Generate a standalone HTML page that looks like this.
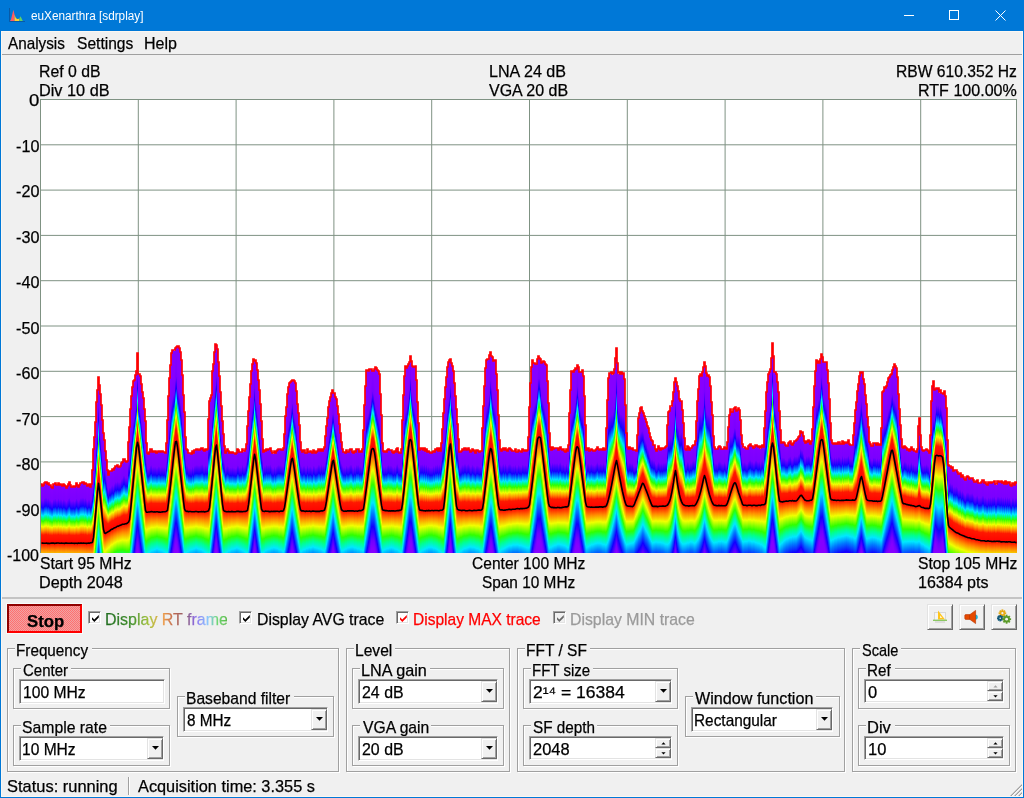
<!DOCTYPE html>
<html lang="en"><head><meta charset="utf-8"><title>euXenarthra [sdrplay]</title>
<style>
*{box-sizing:border-box;margin:0;padding:0}
html,body{width:1024px;height:798px;overflow:hidden;background:#f0f0f0}
body{position:relative;font-family:"Liberation Sans",sans-serif;font-size:16.2px;color:#000;line-height:18px}
.t{position:absolute;white-space:nowrap;height:18px;line-height:18px;transform-origin:0 0;font-size:16.2px;-webkit-text-stroke:0.25px currentColor}
.r{text-align:right}
.c{text-align:center}
#title{position:absolute;left:0;top:0;width:1024px;height:31px;background:#0078d7}
.tt{position:absolute;height:16px;line-height:16px;color:#fff;white-space:nowrap;transform-origin:0 0}
#frame{position:absolute;left:0;top:0;width:1024px;height:798px;border:1px solid #0078d7;pointer-events:none}
#menuline{position:absolute;left:1px;top:54px;width:1022px;height:1px;background:#a0a0a0}
.gb{position:absolute;border:1px solid #a0a0a0;box-shadow:1px 1px 0 #fff, inset 1px 1px 0 #fff}
.gl{position:absolute;background:#f0f0f0;padding:0 2px;height:18px;line-height:18px;white-space:nowrap}
.sunk{position:absolute;background:#fff;border:1px solid;border-color:#a0a0a0 #fff #fff #a0a0a0;box-shadow:inset 1px 1px 0 #696969, inset -1px -1px 0 #e3e3e3}
.sunk .v{position:absolute;left:4px;top:2px;height:18px;line-height:18px;white-space:nowrap}
.btn3{position:absolute;background:#f0f0f0;border:1px solid;border-color:#e3e3e3 #696969 #696969 #e3e3e3;box-shadow:inset 1px 1px 0 #fff, inset -1px -1px 0 #a0a0a0}
.cb{position:absolute;width:13px;height:13px;background:#fff;border:1px solid;border-color:#a0a0a0 #fff #fff #a0a0a0;box-shadow:inset 1px 1px 0 #696969, inset -1px -1px 0 #e3e3e3}
.cb svg{position:absolute;left:2px;top:2px}
.rt{background:linear-gradient(90deg,#1e6b1e 0%,#3f8f2a 22%,#a8c43c 36%,#f0a04a 47%,#c06a50 56%,#8a5a6a 66%,#8c6cf0 74%,#8cc8ff 84%,#6fd86f 92%,#58b848 100%);-webkit-background-clip:text;background-clip:text;color:transparent}
</style></head><body>
<div id="title"><svg style="position:absolute;left:9px;top:8px" width="17" height="15" viewBox="0 0 17 15"><path d="M0.5 0V13.5H16" fill="none" stroke="#103c78" stroke-opacity=".5" stroke-width="1"/><path d="M1 13L2 11.4L4.4 1.7L5.5 6.4V13Z" fill="#ff5a64"/><path d="M5.5 6.4L6.6 9.6L8 11L10.3 10.8V13H5.5Z" fill="#ffcf30"/><path d="M10.3 10.8L11.4 8.2L12.4 10L13.8 13H10.3Z" fill="#5fd068"/></svg><div class="tt" style="left:31.03px;top:8px;transform:scaleX(0.9801);font-size:12px;">euXenarthra [sdrplay]</div><svg style="position:absolute;left:896px;top:0" width="128" height="31" viewBox="0 0 128 31" fill="none" stroke="#fff" stroke-width="1"><path d="M8 15.5H18"/><rect x="53.5" y="10.5" width="9" height="9"/><path d="M99.5 10.5L109.5 20.5M109.5 10.5L99.5 20.5"/></svg></div>
<div class="t" style="left:7.90px;top:34px;transform:scaleX(0.9435);">Analysis</div><div class="t" style="left:76.60px;top:34px;transform:scaleX(0.9622);">Settings</div><div class="t" style="left:144.02px;top:34px;transform:scaleX(0.9889);">Help</div><div id="menuline"></div>
<div class="t" style="left:39.03px;top:62px;transform:scaleX(0.9768);">Ref 0 dB</div><div class="t" style="left:39.00px;top:81px;transform:scaleX(1.0056);">Div 10 dB</div><div class="t" style="left:489.41px;top:62px;transform:scaleX(0.9956);">LNA 24 dB</div><div class="t" style="left:489.10px;top:81px;transform:scaleX(0.9887);">VGA 20 dB</div><div class="t" style="left:896.25px;top:62px;transform:scaleX(0.9665);">RBW 610.352 Hz</div><div class="t" style="left:917.71px;top:81px;transform:scaleX(0.9922);">RTF 100.00%</div><div class="t" style="left:39.59px;top:554px;transform:scaleX(0.9702);">Start 95 MHz</div><div class="t" style="left:39.30px;top:573px;transform:scaleX(1.0023);">Depth 2048</div><div class="t" style="left:472.02px;top:554px;transform:scaleX(0.9622);">Center 100 MHz</div><div class="t" style="left:482.06px;top:573px;transform:scaleX(0.9502);">Span 10 MHz</div><div class="t" style="left:917.99px;top:554px;transform:scaleX(0.9687);">Stop 105 MHz</div><div class="t" style="left:918.20px;top:573px;transform:scaleX(0.9911);">16384 pts</div><div class="t" style="left:28.95px;top:91px;transform:scaleX(1.1455);">0</div><div class="t" style="left:15.75px;top:137px;transform:scaleX(1.0003);">-10</div><div class="t" style="left:15.75px;top:182px;transform:scaleX(1.0003);">-20</div><div class="t" style="left:15.75px;top:228px;transform:scaleX(1.0003);">-30</div><div class="t" style="left:15.75px;top:273px;transform:scaleX(1.0003);">-40</div><div class="t" style="left:15.75px;top:319px;transform:scaleX(1.0003);">-50</div><div class="t" style="left:15.75px;top:364px;transform:scaleX(1.0003);">-60</div><div class="t" style="left:15.75px;top:410px;transform:scaleX(1.0003);">-70</div><div class="t" style="left:15.75px;top:455px;transform:scaleX(1.0003);">-80</div><div class="t" style="left:15.75px;top:501px;transform:scaleX(1.0003);">-90</div><div class="t" style="left:7.16px;top:546px;transform:scaleX(0.9877);">-100</div><svg style="position:absolute;left:40px;top:99px" width="977" height="454" viewBox="40 99 977 454" shape-rendering="crispEdges"><defs><linearGradient id="u" x1="0" y1="0" x2="0" y2="1"><stop offset="0.0" stop-color="#8600ff"/><stop offset="0.25" stop-color="#7a00ff"/><stop offset="0.385" stop-color="#1400ff"/><stop offset="0.45" stop-color="#0070ff"/><stop offset="0.52" stop-color="#00e8ff"/><stop offset="0.565" stop-color="#00ff80"/><stop offset="0.615" stop-color="#30ff00"/><stop offset="0.71" stop-color="#f0ff00"/><stop offset="0.78" stop-color="#ff9000"/><stop offset="0.85" stop-color="#ff1800"/><stop offset="1.0" stop-color="#ff0000"/></linearGradient><linearGradient id="l" x1="0" y1="0" x2="0" y2="1"><stop offset="0.0" stop-color="#ff0800"/><stop offset="0.03" stop-color="#ff2800"/><stop offset="0.115" stop-color="#ff8c00"/><stop offset="0.22" stop-color="#f0ff00"/><stop offset="0.36" stop-color="#30ff00"/><stop offset="0.45" stop-color="#00ff90"/><stop offset="0.54" stop-color="#00e8ff"/><stop offset="0.65" stop-color="#0078ff"/><stop offset="0.78" stop-color="#1000ff"/><stop offset="0.92" stop-color="#7000ff"/><stop offset="1.0" stop-color="#8600ff"/></linearGradient></defs><rect x="40" y="99" width="977" height="454" fill="#fff"/><path d="M40.5 99V553M138.3 99V553M236.1 99V553M333.9 99V553M431.7 99V553M529.5 99V553M627.3 99V553M725.1 99V553M822.9 99V553M920.7 99V553M1016.5 99V553M40 99.5H1017M40 144.8H1017M40 190.1H1017M40 235.4H1017M40 280.7H1017M40 326.0H1017M40 371.3H1017M40 416.6H1017M40 461.9H1017M40 507.2H1017M40 552.5H1017" stroke="#7f9283" stroke-width="1" fill="none" shape-rendering="auto"/><path d="M41,553 L41,484.3 L42,484.3 L42,485.5 L43,485.5 L43,485.4 L44,485.4 L44,483.2 L45,483.2 L45,482.3 L46,482.3 L46,482.1 L47,482.1 L47,483.7 L48,483.7 L48,482.9 L49,482.9 L49,484.9 L50,484.9 L50,485.4 L51,485.4 L51,487.4 L52,487.4 L52,487.6 L53,487.6 L53,484.3 L54,484.3 L54,483.9 L55,483.9 L55,483.2 L56,483.2 L56,485.1 L57,485.1 L57,485.3 L58,485.3 L58,483.1 L59,483.1 L59,485.2 L60,485.2 L60,484.3 L61,484.3 L61,484.6 L62,484.6 L62,486.3 L63,486.3 L63,484.3 L64,484.3 L64,484.9 L65,484.9 L65,486.1 L66,486.1 L66,487.7 L67,487.7 L67,485.6 L68,485.6 L68,483.7 L69,483.7 L69,482.5 L70,482.5 L70,485.4 L71,485.4 L71,486.9 L72,486.9 L72,486.6 L73,486.6 L73,486 L74,486 L74,487 L75,487 L75,485.6 L76,485.6 L76,483.3 L77,483.3 L77,485.1 L78,485.1 L78,486.6 L79,486.6 L79,485.1 L80,485.1 L80,482.9 L81,482.9 L81,482.8 L82,482.8 L82,482.3 L83,482.3 L83,482.4 L84,482.4 L84,483.7 L85,483.7 L85,482.7 L86,482.7 L86,484.5 L87,484.5 L87,486.3 L88,486.3 L88,484.5 L89,484.5 L89,484.2 L90,484.2 L90,486.9 L91,486.9 L91,484.2 L92,484.2 L92,470.2 L93,470.2 L93,448.9 L94,448.9 L94,436.7 L95,436.7 L95,421.6 L96,421.6 L96,402.1 L97,402.1 L97,390.3 L98,390.3 L98,377.5 L99,377.5 L99,384.8 L100,384.8 L100,394.1 L101,394.1 L101,405.3 L102,405.3 L102,419.5 L103,419.5 L103,432.6 L104,432.6 L104,440.2 L105,440.2 L105,451.3 L106,451.3 L106,459.9 L107,459.9 L107,470.4 L108,470.4 L108,475.4 L109,475.4 L109,471.4 L110,471.4 L110,471.4 L111,471.4 L111,470.6 L112,470.6 L112,469.4 L113,469.4 L113,470.4 L114,470.4 L114,467.6 L115,467.6 L115,465.7 L116,465.7 L116,466.4 L117,466.4 L117,465.2 L118,465.2 L118,466.7 L119,466.7 L119,466.9 L120,466.9 L120,466.5 L121,466.5 L121,462.9 L122,462.9 L122,461.7 L123,461.7 L123,459.3 L124,459.3 L124,458.9 L125,458.9 L125,461.4 L126,461.4 L126,461.7 L127,461.7 L127,461.3 L128,461.3 L128,441.9 L129,441.9 L129,426.8 L130,426.8 L130,409.2 L131,409.2 L131,395.9 L132,395.9 L132,387.3 L133,387.3 L133,380.5 L134,380.5 L134,379.9 L135,379.9 L135,374.9 L136,374.9 L136,371.1 L137,371.1 L137,353.4 L138,353.4 L138,374 L139,374 L139,374.1 L140,374.1 L140,376.3 L141,376.3 L141,384.4 L142,384.4 L142,391.8 L143,391.8 L143,397.7 L144,397.7 L144,409.1 L145,409.1 L145,421.2 L146,421.2 L146,443 L147,443 L147,453 L148,453 L148,453.9 L149,453.9 L149,452.4 L150,452.4 L150,449.4 L151,449.4 L151,449.2 L152,449.2 L152,451.9 L153,451.9 L153,451.4 L154,451.4 L154,451.6 L155,451.6 L155,451.5 L156,451.5 L156,452.7 L157,452.7 L157,452 L158,452 L158,450.5 L159,450.5 L159,451 L160,451 L160,452.4 L161,452.4 L161,451.4 L162,451.4 L162,451.3 L163,451.3 L163,452.2 L164,452.2 L164,451.7 L165,451.7 L165,453.4 L166,453.4 L166,443.4 L167,443.4 L167,420.3 L168,420.3 L168,395.7 L169,395.7 L169,377.8 L170,377.8 L170,364.7 L171,364.7 L171,352.9 L172,352.9 L172,350 L173,350 L173,350.3 L174,350.3 L174,350.5 L175,350.5 L175,348 L176,348 L176,347 L177,347 L177,346.2 L178,346.2 L178,346.2 L179,346.2 L179,348.4 L180,348.4 L180,351.6 L181,351.6 L181,359.7 L182,359.7 L182,374.5 L183,374.5 L183,395.3 L184,395.3 L184,412.4 L185,412.4 L185,437.5 L186,437.5 L186,449.1 L187,449.1 L187,450.1 L188,450.1 L188,452.8 L189,452.8 L189,453.1 L190,453.1 L190,453.5 L191,453.5 L191,453.6 L192,453.6 L192,451.3 L193,451.3 L193,453.2 L194,453.2 L194,450.2 L195,450.2 L195,449.6 L196,449.6 L196,449 L197,449 L197,449 L198,449 L198,449.5 L199,449.5 L199,449.6 L200,449.6 L200,449.1 L201,449.1 L201,448.2 L202,448.2 L202,447.9 L203,447.9 L203,450.2 L204,450.2 L204,450.7 L205,450.7 L205,449.2 L206,449.2 L206,450.1 L207,450.1 L207,448.8 L208,448.8 L208,419.4 L209,419.4 L209,401.3 L210,401.3 L210,398 L211,398 L211,395.1 L212,395.1 L212,370.8 L213,370.8 L213,364.4 L214,364.4 L214,352.1 L215,352.1 L215,344.2 L216,344.2 L216,344.9 L217,344.9 L217,348.8 L218,348.8 L218,361.9 L219,361.9 L219,376.4 L220,376.4 L220,392.1 L221,392.1 L221,406.3 L222,406.3 L222,420.5 L223,420.5 L223,434.1 L224,434.1 L224,445.5 L225,445.5 L225,452.9 L226,452.9 L226,450.9 L227,450.9 L227,449.4 L228,449.4 L228,451.1 L229,451.1 L229,452.6 L230,452.6 L230,452.2 L231,452.2 L231,452.9 L232,452.9 L232,451.8 L233,451.8 L233,452.8 L234,452.8 L234,453.2 L235,453.2 L235,453.6 L236,453.6 L236,452.8 L237,452.8 L237,449.5 L238,449.5 L238,449.8 L239,449.8 L239,452.1 L240,452.1 L240,452 L241,452 L241,452.2 L242,452.2 L242,449.1 L243,449.1 L243,451.5 L244,451.5 L244,451.3 L245,451.3 L245,449.1 L246,449.1 L246,443.5 L247,443.5 L247,426.3 L248,426.3 L248,411.2 L249,411.2 L249,397.1 L250,397.1 L250,383.7 L251,383.7 L251,370.9 L252,370.9 L252,363.8 L253,363.8 L253,359.3 L254,359.3 L254,361.1 L255,361.1 L255,360.1 L256,360.1 L256,363 L257,363 L257,370.1 L258,370.1 L258,379.8 L259,379.8 L259,389.7 L260,389.7 L260,403.7 L261,403.7 L261,421 L262,421 L262,439.5 L263,439.5 L263,452 L264,452 L264,450.1 L265,450.1 L265,450.6 L266,450.6 L266,448.5 L267,448.5 L267,449.8 L268,449.8 L268,448.9 L269,448.9 L269,449.3 L270,449.3 L270,448.1 L271,448.1 L271,451.5 L272,451.5 L272,453.1 L273,453.1 L273,453.5 L274,453.5 L274,451.2 L275,451.2 L275,453.3 L276,453.3 L276,451.1 L277,451.1 L277,449.9 L278,449.9 L278,448.7 L279,448.7 L279,449.1 L280,449.1 L280,449.1 L281,449.1 L281,450.3 L282,450.3 L282,450.1 L283,450.1 L283,447.6 L284,447.6 L284,433.6 L285,433.6 L285,416.2 L286,416.2 L286,407.3 L287,407.3 L287,393.8 L288,393.8 L288,387.2 L289,387.2 L289,382.8 L290,382.8 L290,382 L291,382 L291,380.8 L292,380.8 L292,380 L293,380 L293,380.1 L294,380.1 L294,381.1 L295,381.1 L295,382.8 L296,382.8 L296,391 L297,391 L297,403.5 L298,403.5 L298,412.8 L299,412.8 L299,425.4 L300,425.4 L300,442.3 L301,442.3 L301,450.4 L302,450.4 L302,452.3 L303,452.3 L303,450.3 L304,450.3 L304,450.1 L305,450.1 L305,452.6 L306,452.6 L306,453.1 L307,453.1 L307,449.4 L308,449.4 L308,452.1 L309,452.1 L309,451.6 L310,451.6 L310,450.6 L311,450.6 L311,452.2 L312,452.2 L312,453.4 L313,453.4 L313,449.9 L314,449.9 L314,450.5 L315,450.5 L315,452.7 L316,452.7 L316,452.1 L317,452.1 L317,451 L318,451 L318,448.7 L319,448.7 L319,448.8 L320,448.8 L320,450.7 L321,450.7 L321,449 L322,449 L322,450.7 L323,450.7 L323,448.9 L324,448.9 L324,446.6 L325,446.6 L325,436 L326,436 L326,425.5 L327,425.5 L327,418.3 L328,418.3 L328,407.4 L329,407.4 L329,400.7 L330,400.7 L330,396.7 L331,396.7 L331,393.1 L332,393.1 L332,390.3 L333,390.3 L333,393.1 L334,393.1 L334,393.4 L335,393.4 L335,397.1 L336,397.1 L336,399.1 L337,399.1 L337,406.1 L338,406.1 L338,413.5 L339,413.5 L339,424.5 L340,424.5 L340,433 L341,433 L341,442.4 L342,442.4 L342,449.1 L343,449.1 L343,451.9 L344,451.9 L344,452.1 L345,452.1 L345,453.1 L346,453.1 L346,450 L347,450 L347,451.5 L348,451.5 L348,451.7 L349,451.7 L349,450.4 L350,450.4 L350,449 L351,449 L351,449 L352,449 L352,452.1 L353,452.1 L353,453.2 L354,453.2 L354,450.8 L355,450.8 L355,452.1 L356,452.1 L356,449 L357,449 L357,449.4 L358,449.4 L358,448.7 L359,448.7 L359,451.7 L360,451.7 L360,450.5 L361,450.5 L361,451.8 L362,451.8 L362,448.8 L363,448.8 L363,429.7 L364,429.7 L364,405 L365,405 L365,385.7 L366,385.7 L366,370.4 L367,370.4 L367,370.4 L368,370.4 L368,371.3 L369,371.3 L369,369.2 L370,369.2 L370,368.8 L371,368.8 L371,369.3 L372,369.3 L372,370.6 L373,370.6 L373,370.5 L374,370.5 L374,368.5 L375,368.5 L375,367.4 L376,367.4 L376,368.2 L377,368.2 L377,369.5 L378,369.5 L378,371 L379,371 L379,374 L380,374 L380,393.7 L381,393.7 L381,414.8 L382,414.8 L382,442.9 L383,442.9 L383,451.3 L384,451.3 L384,452.3 L385,452.3 L385,451.4 L386,451.4 L386,451.9 L387,451.9 L387,449.8 L388,449.8 L388,448.6 L389,448.6 L389,450.1 L390,450.1 L390,449.8 L391,449.8 L391,450.2 L392,450.2 L392,451.8 L393,451.8 L393,453.1 L394,453.1 L394,451.2 L395,451.2 L395,452.2 L396,452.2 L396,448.9 L397,448.9 L397,448.1 L398,448.1 L398,451.8 L399,451.8 L399,452.8 L400,452.8 L400,452.9 L401,452.9 L401,448.6 L402,448.6 L402,419.8 L403,419.8 L403,394.9 L404,394.9 L404,375.8 L405,375.8 L405,366 L406,366 L406,368.1 L407,368.1 L407,366 L408,366 L408,364 L409,364 L409,361.6 L410,361.6 L410,356.3 L411,356.3 L411,361.3 L412,361.3 L412,366 L413,366 L413,366.9 L414,366.9 L414,366.7 L415,366.7 L415,366.4 L416,366.4 L416,379.7 L417,379.7 L417,401.6 L418,401.6 L418,422.5 L419,422.5 L419,450.4 L420,450.4 L420,448.4 L421,448.4 L421,449 L422,449 L422,448.2 L423,448.2 L423,449.6 L424,449.6 L424,448.2 L425,448.2 L425,451 L426,451 L426,449.1 L427,449.1 L427,451.9 L428,451.9 L428,450.7 L429,450.7 L429,452.4 L430,452.4 L430,452.8 L431,452.8 L431,452.6 L432,452.6 L432,452.4 L433,452.4 L433,450.5 L434,450.5 L434,451.8 L435,451.8 L435,449.5 L436,449.5 L436,450 L437,450 L437,448.4 L438,448.4 L438,450.6 L439,450.6 L439,448.2 L440,448.2 L440,450.7 L441,450.7 L441,443.3 L442,443.3 L442,428.9 L443,428.9 L443,413.3 L444,413.3 L444,398.7 L445,398.7 L445,387.1 L446,387.1 L446,377.4 L447,377.4 L447,366.9 L448,366.9 L448,361.8 L449,361.8 L449,359.6 L450,359.6 L450,359 L451,359 L451,363.2 L452,363.2 L452,366.2 L453,366.2 L453,371.1 L454,371.1 L454,383.2 L455,383.2 L455,395.9 L456,395.9 L456,409 L457,409 L457,423.9 L458,423.9 L458,439.2 L459,439.2 L459,451.9 L460,451.9 L460,452.2 L461,452.2 L461,450.8 L462,450.8 L462,449 L463,449 L463,449.7 L464,449.7 L464,447.8 L465,447.8 L465,447.7 L466,447.7 L466,450.1 L467,450.1 L467,448.6 L468,448.6 L468,447.8 L469,447.8 L469,449.9 L470,449.9 L470,451.7 L471,451.7 L471,451 L472,451 L472,448.6 L473,448.6 L473,450.1 L474,450.1 L474,451.4 L475,451.4 L475,452.8 L476,452.8 L476,450.4 L477,450.4 L477,449.9 L478,449.9 L478,451.1 L479,451.1 L479,451.9 L480,451.9 L480,451.3 L481,451.3 L481,450.9 L482,450.9 L482,428.3 L483,428.3 L483,405.9 L484,405.9 L484,385.8 L485,385.8 L485,368.3 L486,368.3 L486,359.7 L487,359.7 L487,359.1 L488,359.1 L488,359 L489,359 L489,355.4 L490,355.4 L490,351.8 L491,351.8 L491,356.5 L492,356.5 L492,357.4 L493,357.4 L493,360.6 L494,360.6 L494,360.1 L495,360.1 L495,360.2 L496,360.2 L496,373.6 L497,373.6 L497,390.1 L498,390.1 L498,415.2 L499,415.2 L499,440.1 L500,440.1 L500,449 L501,449 L501,451.1 L502,451.1 L502,449.4 L503,449.4 L503,447.7 L504,447.7 L504,450.4 L505,450.4 L505,447.8 L506,447.8 L506,450.3 L507,450.3 L507,451.2 L508,451.2 L508,449.1 L509,449.1 L509,448.4 L510,448.4 L510,448.6 L511,448.6 L511,450.3 L512,450.3 L512,451 L513,451 L513,450.5 L514,450.5 L514,451.4 L515,451.4 L515,449.3 L516,449.3 L516,451.8 L517,451.8 L517,452.3 L518,452.3 L518,449.6 L519,449.6 L519,450.9 L520,450.9 L520,451.3 L521,451.3 L521,452.1 L522,452.1 L522,449.4 L523,449.4 L523,450.3 L524,450.3 L524,450.7 L525,450.7 L525,450 L526,450 L526,450.8 L527,450.8 L527,449.9 L528,449.9 L528,436.6 L529,436.6 L529,407.3 L530,407.3 L530,383.4 L531,383.4 L531,367.2 L532,367.2 L532,360.3 L533,360.3 L533,363.2 L534,363.2 L534,362.7 L535,362.7 L535,363.7 L536,363.7 L536,363.9 L537,363.9 L537,358.9 L538,358.9 L538,355.9 L539,355.9 L539,358 L540,358 L540,359.2 L541,359.2 L541,363.4 L542,363.4 L542,362 L543,362 L543,361.3 L544,361.3 L544,361.5 L545,361.5 L545,363.8 L546,363.8 L546,365 L547,365 L547,380.7 L548,380.7 L548,402.7 L549,402.7 L549,432.6 L550,432.6 L550,446.6 L551,446.6 L551,449.7 L552,449.7 L552,447.3 L553,447.3 L553,448.7 L554,448.7 L554,447.7 L555,447.7 L555,448.1 L556,448.1 L556,447.9 L557,447.9 L557,447.9 L558,447.9 L558,449.8 L559,449.8 L559,447.7 L560,447.7 L560,446.9 L561,446.9 L561,449.4 L562,449.4 L562,450 L563,450 L563,449.1 L564,449.1 L564,451 L565,451 L565,451.7 L566,451.7 L566,448.8 L567,448.8 L567,451 L568,451 L568,444.5 L569,444.5 L569,413.4 L570,413.4 L570,389.7 L571,389.7 L571,371 L572,371 L572,371.4 L573,371.4 L573,371.5 L574,371.5 L574,370.1 L575,370.1 L575,368 L576,368 L576,368.6 L577,368.6 L577,364.6 L578,364.6 L578,366.5 L579,366.5 L579,372.4 L580,372.4 L580,372.3 L581,372.3 L581,372.4 L582,372.4 L582,370 L583,370 L583,376.2 L584,376.2 L584,395.9 L585,395.9 L585,425.2 L586,425.2 L586,450.1 L587,450.1 L587,447.7 L588,447.7 L588,448.1 L589,448.1 L589,450.6 L590,450.6 L590,449.9 L591,449.9 L591,448.9 L592,448.9 L592,450 L593,450 L593,450.6 L594,450.6 L594,451.1 L595,451.1 L595,450.3 L596,450.3 L596,448.5 L597,448.5 L597,446.9 L598,446.9 L598,449.5 L599,449.5 L599,449.7 L600,449.7 L600,448.8 L601,448.8 L601,449.4 L602,449.4 L602,449.8 L603,449.8 L603,447.7 L604,447.7 L604,449.7 L605,449.7 L605,449 L606,449 L606,428.1 L607,428.1 L607,400.2 L608,400.2 L608,377.7 L609,377.7 L609,373.4 L610,373.4 L610,373.4 L611,373.4 L611,372 L612,372 L612,374.5 L613,374.5 L613,372.7 L614,372.7 L614,369.4 L615,369.4 L615,358.2 L616,358.2 L616,348.4 L617,348.4 L617,362.7 L618,362.7 L618,373.5 L619,373.5 L619,371.7 L620,371.7 L620,373.9 L621,373.9 L621,372.1 L622,372.1 L622,373.9 L623,373.9 L623,373.2 L624,373.2 L624,378.9 L625,378.9 L625,405.1 L626,405.1 L626,433.3 L627,433.3 L627,446.8 L628,446.8 L628,448.9 L629,448.9 L629,447.4 L630,447.4 L630,448 L631,448 L631,448.9 L632,448.9 L632,447.9 L633,447.9 L633,449.9 L634,449.9 L634,450.4 L635,450.4 L635,450.4 L636,450.4 L636,450.6 L637,450.6 L637,434.6 L638,434.6 L638,417.7 L639,417.7 L639,412.8 L640,412.8 L640,407.7 L641,407.7 L641,406.8 L642,406.8 L642,411.1 L643,411.1 L643,412.9 L644,412.9 L644,416.2 L645,416.2 L645,418.8 L646,418.8 L646,421.8 L647,421.8 L647,426.2 L648,426.2 L648,427.9 L649,427.9 L649,432.9 L650,432.9 L650,437.5 L651,437.5 L651,439.6 L652,439.6 L652,441.3 L653,441.3 L653,444.9 L654,444.9 L654,445.1 L655,445.1 L655,449 L656,449 L656,450.6 L657,450.6 L657,448.8 L658,448.8 L658,446.1 L659,446.1 L659,447.9 L660,447.9 L660,449.6 L661,449.6 L661,448.4 L662,448.4 L662,449.3 L663,449.3 L663,448.1 L664,448.1 L664,448.2 L665,448.2 L665,447 L666,447 L666,445.6 L667,445.6 L667,425.3 L668,425.3 L668,412.2 L669,412.2 L669,411.1 L670,411.1 L670,406.5 L671,406.5 L671,406.5 L672,406.5 L672,401 L673,401 L673,392 L674,392 L674,381.7 L675,381.7 L675,378.3 L676,378.3 L676,382.5 L677,382.5 L677,386.5 L678,386.5 L678,390.9 L679,390.9 L679,399.3 L680,399.3 L680,400.9 L681,400.9 L681,401.1 L682,401.1 L682,410.4 L683,410.4 L683,423.1 L684,423.1 L684,438 L685,438 L685,449.2 L686,449.2 L686,450 L687,450 L687,446.2 L688,446.2 L688,447.4 L689,447.4 L689,449.7 L690,449.7 L690,447.8 L691,447.8 L691,448.2 L692,448.2 L692,446.1 L693,446.1 L693,444.7 L694,444.7 L694,444.7 L695,444.7 L695,440.7 L696,440.7 L696,420.6 L697,420.6 L697,401.2 L698,401.2 L698,389.2 L699,389.2 L699,375.8 L700,375.8 L700,374.1 L701,374.1 L701,376.3 L702,376.3 L702,371.7 L703,371.7 L703,367 L704,367 L704,362.3 L705,362.3 L705,365.9 L706,365.9 L706,372.5 L707,372.5 L707,375.6 L708,375.6 L708,374.9 L709,374.9 L709,377.4 L710,377.4 L710,386.1 L711,386.1 L711,401.5 L712,401.5 L712,415.2 L713,415.2 L713,436.2 L714,436.2 L714,447.1 L715,447.1 L715,448.8 L716,448.8 L716,448.5 L717,448.5 L717,449.4 L718,449.4 L718,446.8 L719,446.8 L719,445.8 L720,445.8 L720,447 L721,447 L721,448.7 L722,448.7 L722,449.1 L723,449.1 L723,449.4 L724,449.4 L724,446.7 L725,446.7 L725,448.2 L726,448.2 L726,449.2 L727,449.2 L727,441.9 L728,441.9 L728,427.4 L729,427.4 L729,415.2 L730,415.2 L730,409 L731,409 L731,411.6 L732,411.6 L732,411.6 L733,411.6 L733,409.3 L734,409.3 L734,407.7 L735,407.7 L735,407 L736,407 L736,410.6 L737,410.6 L737,409.9 L738,409.9 L738,408.3 L739,408.3 L739,409.9 L740,409.9 L740,419.6 L741,419.6 L741,435.1 L742,435.1 L742,444.3 L743,444.3 L743,447.5 L744,447.5 L744,447.2 L745,447.2 L745,448.1 L746,448.1 L746,449.1 L747,449.1 L747,448.9 L748,448.9 L748,446.2 L749,446.2 L749,445 L750,445 L750,444 L751,444 L751,445.9 L752,445.9 L752,446 L753,446 L753,448.2 L754,448.2 L754,447.5 L755,447.5 L755,445 L756,445 L756,444.8 L757,444.8 L757,446.4 L758,446.4 L758,447.1 L759,447.1 L759,446.4 L760,446.4 L760,448.5 L761,448.5 L761,445.7 L762,445.7 L762,444.8 L763,444.8 L763,447.3 L764,447.3 L764,427.8 L765,427.8 L765,411.1 L766,411.1 L766,392.4 L767,392.4 L767,381.6 L768,381.6 L768,374.4 L769,374.4 L769,372.2 L770,372.2 L770,369.2 L771,369.2 L771,358.3 L772,358.3 L772,343 L773,343 L773,356.3 L774,356.3 L774,372.4 L775,372.4 L775,371.5 L776,371.5 L776,373.9 L777,373.9 L777,382.1 L778,382.1 L778,392 L779,392 L779,410.6 L780,410.6 L780,430 L781,430 L781,442.6 L782,442.6 L782,442.3 L783,442.3 L783,442.3 L784,442.3 L784,443 L785,443 L785,445.1 L786,445.1 L786,446.1 L787,446.1 L787,445.9 L788,445.9 L788,442.7 L789,442.7 L789,441.8 L790,441.8 L790,441 L791,441 L791,444.4 L792,444.4 L792,445.3 L793,445.3 L793,442.7 L794,442.7 L794,440.7 L795,440.7 L795,441.1 L796,441.1 L796,439.9 L797,439.9 L797,439.5 L798,439.5 L798,437.4 L799,437.4 L799,436.1 L800,436.1 L800,430.8 L801,430.8 L801,433.2 L802,433.2 L802,431.9 L803,431.9 L803,435.6 L804,435.6 L804,441.1 L805,441.1 L805,443.2 L806,443.2 L806,440.9 L807,440.9 L807,441.6 L808,441.6 L808,440.3 L809,440.3 L809,441.1 L810,441.1 L810,443.8 L811,443.8 L811,440.8 L812,440.8 L812,428.6 L813,428.6 L813,406.6 L814,406.6 L814,385.6 L815,385.6 L815,371.1 L816,371.1 L816,359.9 L817,359.9 L817,362.9 L818,362.9 L818,360.8 L819,360.8 L819,362.7 L820,362.7 L820,358.9 L821,358.9 L821,354.4 L822,354.4 L822,356.9 L823,356.9 L823,362 L824,362 L824,362.2 L825,362.2 L825,361.7 L826,361.7 L826,362.2 L827,362.2 L827,369.5 L828,369.5 L828,382.8 L829,382.8 L829,399.4 L830,399.4 L830,422.7 L831,422.7 L831,440.1 L832,440.1 L832,442.8 L833,442.8 L833,444.1 L834,444.1 L834,442.5 L835,442.5 L835,444.1 L836,444.1 L836,442.5 L837,442.5 L837,443.8 L838,443.8 L838,441.7 L839,441.7 L839,441.9 L840,441.9 L840,443.6 L841,443.6 L841,444.3 L842,444.3 L842,441 L843,441 L843,444 L844,444 L844,441.8 L845,441.8 L845,442.8 L846,442.8 L846,442.7 L847,442.7 L847,442.2 L848,442.2 L848,440.1 L849,440.1 L849,443.7 L850,443.7 L850,444.9 L851,444.9 L851,444.7 L852,444.7 L852,444.9 L853,444.9 L853,435.2 L854,435.2 L854,423.4 L855,423.4 L855,410.2 L856,410.2 L856,402.3 L857,402.3 L857,391.3 L858,391.3 L858,384.5 L859,384.5 L859,376 L860,376 L860,371.6 L861,371.6 L861,372.9 L862,372.9 L862,371.9 L863,371.9 L863,378.9 L864,378.9 L864,384.3 L865,384.3 L865,394.8 L866,394.8 L866,404.1 L867,404.1 L867,416.5 L868,416.5 L868,426.9 L869,426.9 L869,441.6 L870,441.6 L870,444.1 L871,444.1 L871,446.1 L872,446.1 L872,445.9 L873,445.9 L873,442.7 L874,442.7 L874,443.3 L875,443.3 L875,443.4 L876,443.4 L876,445.1 L877,445.1 L877,443.4 L878,443.4 L878,445.3 L879,445.3 L879,444.2 L880,444.2 L880,445.4 L881,445.4 L881,428.5 L882,428.5 L882,392.4 L883,392.4 L883,391.4 L884,391.4 L884,387.3 L885,387.3 L885,388 L886,388 L886,385.8 L887,385.8 L887,382 L888,382 L888,377.8 L889,377.8 L889,377.3 L890,377.3 L890,374.5 L891,374.5 L891,373.6 L892,373.6 L892,370.1 L893,370.1 L893,366.7 L894,366.7 L894,364.5 L895,364.5 L895,365.8 L896,365.8 L896,367.7 L897,367.7 L897,376.7 L898,376.7 L898,394.1 L899,394.1 L899,409.5 L900,409.5 L900,424.5 L901,424.5 L901,439.1 L902,439.1 L902,446.7 L903,446.7 L903,448.1 L904,448.1 L904,446 L905,446 L905,446.8 L906,446.8 L906,447.9 L907,447.9 L907,450.2 L908,450.2 L908,448.6 L909,448.6 L909,450.7 L910,450.7 L910,449.4 L911,449.4 L911,447.4 L912,447.4 L912,450.4 L913,450.4 L913,449.4 L914,449.4 L914,450.9 L915,450.9 L915,451.2 L916,451.2 L916,451.7 L917,451.7 L917,448.6 L918,448.6 L918,425.8 L919,425.8 L919,417.9 L920,417.9 L920,434.9 L921,434.9 L921,447.2 L922,447.2 L922,450.3 L923,450.3 L923,451 L924,451 L924,449.5 L925,449.5 L925,450.4 L926,450.4 L926,449 L927,449 L927,450.2 L928,450.2 L928,451.2 L929,451.2 L929,453.2 L930,453.2 L930,435.4 L931,435.4 L931,401 L932,401 L932,385.6 L933,385.6 L933,381.1 L934,381.1 L934,389.6 L935,389.6 L935,388.9 L936,388.9 L936,388 L937,388 L937,389.3 L938,389.3 L938,388.2 L939,388.2 L939,392.5 L940,392.5 L940,389.7 L941,389.7 L941,392.7 L942,392.7 L942,392.8 L943,392.8 L943,393.8 L944,393.8 L944,391 L945,391 L945,395.6 L946,395.6 L946,408.1 L947,408.1 L947,439.9 L948,439.9 L948,465.2 L949,465.2 L949,466 L950,466 L950,465.9 L951,465.9 L951,467.6 L952,467.6 L952,467.2 L953,467.2 L953,471 L954,471 L954,470.1 L955,470.1 L955,470.4 L956,470.4 L956,469.9 L957,469.9 L957,471.5 L958,471.5 L958,474.3 L959,474.3 L959,473.7 L960,473.7 L960,473.3 L961,473.3 L961,476.5 L962,476.5 L962,474.8 L963,474.8 L963,477 L964,477 L964,479.1 L965,479.1 L965,480.1 L966,480.1 L966,477.3 L967,477.3 L967,476.2 L968,476.2 L968,476.6 L969,476.6 L969,478.5 L970,478.5 L970,477.9 L971,477.9 L971,477.8 L972,477.8 L972,477.5 L973,477.5 L973,479.6 L974,479.6 L974,481.7 L975,481.7 L975,482.1 L976,482.1 L976,480.9 L977,480.9 L977,479.7 L978,479.7 L978,482.8 L979,482.8 L979,483 L980,483 L980,482.7 L981,482.7 L981,482.3 L982,482.3 L982,480.2 L983,480.2 L983,480.3 L984,480.3 L984,482.6 L985,482.6 L985,482 L986,482 L986,483.5 L987,483.5 L987,484.5 L988,484.5 L988,482.2 L989,482.2 L989,483.3 L990,483.3 L990,482.2 L991,482.2 L991,483.3 L992,483.3 L992,481.8 L993,481.8 L993,481.8 L994,481.8 L994,481.1 L995,481.1 L995,484.2 L996,484.2 L996,484.5 L997,484.5 L997,481.5 L998,481.5 L998,481.2 L999,481.2 L999,482 L1000,482 L1000,482 L1001,482 L1001,481.4 L1002,481.4 L1002,483 L1003,483 L1003,482.1 L1004,482.1 L1004,483.8 L1005,483.8 L1005,481.3 L1006,481.3 L1006,484 L1007,484 L1007,481.6 L1008,481.6 L1008,483.4 L1009,483.4 L1009,482.3 L1010,482.3 L1010,484.5 L1011,484.5 L1011,485.8 L1012,485.8 L1012,482.5 L1013,482.5 L1013,482.8 L1014,482.8 L1014,484.9 L1015,484.9 L1015,482.3 L1016,482.3 L1016,482.9 L1017,482.9 L1017,553 Z" fill="#8600ff"/><g fill="url(#l)"><rect x="41" y="543.1" width="1" height="63.5"/><rect x="42" y="543" width="1" height="63.5"/><rect x="43" y="543.2" width="1" height="63.5"/><rect x="44" y="543.3" width="1" height="63.5"/><rect x="45" y="543.2" width="1" height="63.6"/><rect x="46" y="543.1" width="1" height="63.6"/><rect x="47" y="543.4" width="1" height="63.6"/><rect x="48" y="543.2" width="1" height="63.6"/><rect x="49" y="543.5" width="1" height="63.7"/><rect x="50" y="543.2" width="1" height="63.7"/><rect x="51" y="543" width="1" height="63.7"/><rect x="52" y="543.1" width="1" height="63.8"/><rect x="53" y="543.1" width="1" height="63.8"/><rect x="54" y="543.4" width="1" height="63.8"/><rect x="55" y="543.3" width="1" height="63.9"/><rect x="56" y="543.1" width="1" height="63.9"/><rect x="57" y="543" width="1" height="63.9"/><rect x="58" y="543" width="1" height="64"/><rect x="59" y="543.2" width="1" height="64"/><rect x="60" y="543.2" width="1" height="64.1"/><rect x="61" y="543.1" width="1" height="64.1"/><rect x="62" y="543.3" width="1" height="64.2"/><rect x="63" y="543.3" width="1" height="64.3"/><rect x="64" y="543.4" width="1" height="64.4"/><rect x="65" y="543.1" width="1" height="64.4"/><rect x="66" y="543" width="1" height="64.5"/><rect x="67" y="543.3" width="1" height="64.6"/><rect x="68" y="543.2" width="1" height="64.7"/><rect x="69" y="543.3" width="1" height="64.8"/><rect x="70" y="543.2" width="1" height="65"/><rect x="71" y="543.1" width="1" height="65.1"/><rect x="72" y="543.2" width="1" height="65.2"/><rect x="73" y="543.2" width="1" height="65.4"/><rect x="74" y="543.4" width="1" height="65.6"/><rect x="75" y="543.3" width="1" height="65.8"/><rect x="76" y="543.3" width="1" height="66.1"/><rect x="77" y="543.4" width="1" height="66.3"/><rect x="78" y="543.1" width="1" height="66.6"/><rect x="79" y="543.2" width="1" height="67"/><rect x="80" y="543.1" width="1" height="67.4"/><rect x="81" y="543" width="1" height="67.8"/><rect x="82" y="543.2" width="1" height="68.3"/><rect x="83" y="543.1" width="1" height="68.9"/><rect x="84" y="543.3" width="1" height="69.7"/><rect x="85" y="543.2" width="1" height="70.5"/><rect x="86" y="543.4" width="1" height="71.4"/><rect x="87" y="543.3" width="1" height="72.6"/><rect x="88" y="543.1" width="1" height="73.9"/><rect x="89" y="543.2" width="1" height="75.5"/><rect x="90" y="542.8" width="1" height="77.4"/><rect x="91" y="542.7" width="1" height="79.6"/><rect x="92" y="542.2" width="1" height="82.2"/><rect x="93" y="537.7" width="1" height="85"/><rect x="94" y="527.5" width="1" height="88.1"/><rect x="95" y="515.7" width="1" height="91.1"/><rect x="96" y="504" width="1" height="93.8"/><rect x="97" y="492.1" width="1" height="95.6"/><rect x="98" y="483.4" width="1" height="96.3"/><rect x="99" y="489.8" width="1" height="95.6"/><rect x="100" y="499.8" width="1" height="93.8"/><rect x="101" y="510.1" width="1" height="91.1"/><rect x="102" y="520.4" width="1" height="88.1"/><rect x="103" y="529.5" width="1" height="85"/><rect x="104" y="533" width="1" height="82.2"/><rect x="105" y="533.4" width="1" height="79.6"/><rect x="106" y="532.7" width="1" height="77.4"/><rect x="107" y="532.1" width="1" height="75.5"/><rect x="108" y="531.5" width="1" height="73.9"/><rect x="109" y="531.1" width="1" height="72.6"/><rect x="110" y="530" width="1" height="71.4"/><rect x="111" y="529.3" width="1" height="70.5"/><rect x="112" y="529.1" width="1" height="69.7"/><rect x="113" y="528.4" width="1" height="68.9"/><rect x="114" y="527.8" width="1" height="68.3"/><rect x="115" y="527.5" width="1" height="67.8"/><rect x="116" y="526.9" width="1" height="67.6"/><rect x="117" y="526.2" width="1" height="68"/><rect x="118" y="526.1" width="1" height="68.5"/><rect x="119" y="525.6" width="1" height="69"/><rect x="120" y="525.2" width="1" height="69.6"/><rect x="121" y="524.8" width="1" height="70.3"/><rect x="122" y="524.3" width="1" height="71.2"/><rect x="123" y="524.2" width="1" height="72.2"/><rect x="124" y="524.1" width="1" height="73.3"/><rect x="125" y="523.8" width="1" height="74.6"/><rect x="126" y="523.7" width="1" height="76.2"/><rect x="127" y="523" width="1" height="78"/><rect x="128" y="522.2" width="1" height="80.2"/><rect x="129" y="520" width="1" height="82.8"/><rect x="130" y="511.3" width="1" height="85.9"/><rect x="131" y="501" width="1" height="89.4"/><rect x="132" y="490.4" width="1" height="93.3"/><rect x="133" y="479.7" width="1" height="97.5"/><rect x="134" y="468.9" width="1" height="101.7"/><rect x="135" y="458" width="1" height="105.3"/><rect x="136" y="447.4" width="1" height="107.8"/><rect x="137" y="442.3" width="1" height="108.8"/><rect x="138" y="446.3" width="1" height="107.8"/><rect x="139" y="454.9" width="1" height="105.3"/><rect x="140" y="464.5" width="1" height="101.7"/><rect x="141" y="474.1" width="1" height="97.5"/><rect x="142" y="483.7" width="1" height="93.3"/><rect x="143" y="492.9" width="1" height="89.4"/><rect x="144" y="502.2" width="1" height="85.9"/><rect x="145" y="510.4" width="1" height="82.8"/><rect x="146" y="512.3" width="1" height="80.2"/><rect x="147" y="512.2" width="1" height="78"/><rect x="148" y="512" width="1" height="76.2"/><rect x="149" y="512" width="1" height="74.6"/><rect x="150" y="511.8" width="1" height="73.3"/><rect x="151" y="511.6" width="1" height="72.2"/><rect x="152" y="511.8" width="1" height="71.2"/><rect x="153" y="512" width="1" height="70.3"/><rect x="154" y="511.9" width="1" height="69.6"/><rect x="155" y="512" width="1" height="69"/><rect x="156" y="511.7" width="1" height="68.5"/><rect x="157" y="511.8" width="1" height="68.3"/><rect x="158" y="512.1" width="1" height="68.8"/><rect x="159" y="512" width="1" height="69.4"/><rect x="160" y="512.2" width="1" height="70.1"/><rect x="161" y="512" width="1" height="70.9"/><rect x="162" y="511.9" width="1" height="71.9"/><rect x="163" y="511.8" width="1" height="73"/><rect x="164" y="511.7" width="1" height="74.3"/><rect x="165" y="511.6" width="1" height="75.9"/><rect x="166" y="511.2" width="1" height="77.7"/><rect x="167" y="510.3" width="1" height="79.9"/><rect x="168" y="502.9" width="1" height="82.4"/><rect x="169" y="494.1" width="1" height="85.4"/><rect x="170" y="485.5" width="1" height="88.8"/><rect x="171" y="476.3" width="1" height="92.6"/><rect x="172" y="467.1" width="1" height="96.5"/><rect x="173" y="457.7" width="1" height="100.2"/><rect x="174" y="448.8" width="1" height="103.2"/><rect x="175" y="441.7" width="1" height="105"/><rect x="176" y="441.4" width="1" height="105.2"/><rect x="177" y="447" width="1" height="103.7"/><rect x="178" y="455.7" width="1" height="100.9"/><rect x="179" y="464.8" width="1" height="97.3"/><rect x="180" y="474.4" width="1" height="93.4"/><rect x="181" y="483.2" width="1" height="89.5"/><rect x="182" y="492.2" width="1" height="86.1"/><rect x="183" y="501.4" width="1" height="83"/><rect x="184" y="509" width="1" height="80.4"/><rect x="185" y="510.9" width="1" height="78.1"/><rect x="186" y="511.4" width="1" height="76.2"/><rect x="187" y="511.3" width="1" height="74.6"/><rect x="188" y="511.7" width="1" height="73.2"/><rect x="189" y="511.5" width="1" height="72.1"/><rect x="190" y="511.5" width="1" height="71.1"/><rect x="191" y="511.7" width="1" height="70.3"/><rect x="192" y="511.8" width="1" height="69.5"/><rect x="193" y="511.7" width="1" height="68.9"/><rect x="194" y="511.8" width="1" height="68.4"/><rect x="195" y="511.5" width="1" height="67.9"/><rect x="196" y="511.5" width="1" height="67.6"/><rect x="197" y="511.7" width="1" height="68.1"/><rect x="198" y="511.9" width="1" height="68.6"/><rect x="199" y="511.8" width="1" height="69.2"/><rect x="200" y="511.7" width="1" height="69.9"/><rect x="201" y="511.6" width="1" height="70.6"/><rect x="202" y="511.8" width="1" height="71.6"/><rect x="203" y="511.6" width="1" height="72.6"/><rect x="204" y="511.9" width="1" height="73.9"/><rect x="205" y="511.8" width="1" height="75.4"/><rect x="206" y="511.5" width="1" height="77.2"/><rect x="207" y="511.3" width="1" height="79.2"/><rect x="208" y="510.8" width="1" height="81.7"/><rect x="209" y="507.9" width="1" height="84.6"/><rect x="210" y="498.8" width="1" height="87.9"/><rect x="211" y="489" width="1" height="91.5"/><rect x="212" y="478.4" width="1" height="95.3"/><rect x="213" y="468.1" width="1" height="99"/><rect x="214" y="457.5" width="1" height="102"/><rect x="215" y="447.9" width="1" height="103.9"/><rect x="216" y="445" width="1" height="104.3"/><rect x="217" y="453.6" width="1" height="103"/><rect x="218" y="463.6" width="1" height="100.3"/><rect x="219" y="474.3" width="1" height="96.8"/><rect x="220" y="484.5" width="1" height="93"/><rect x="221" y="494.9" width="1" height="89.3"/><rect x="222" y="504.3" width="1" height="85.8"/><rect x="223" y="510.2" width="1" height="82.8"/><rect x="224" y="511.3" width="1" height="80.2"/><rect x="225" y="511.4" width="1" height="77.9"/><rect x="226" y="511.8" width="1" height="76.1"/><rect x="227" y="511.7" width="1" height="74.5"/><rect x="228" y="511.4" width="1" height="73.1"/><rect x="229" y="511.8" width="1" height="72"/><rect x="230" y="511.7" width="1" height="71"/><rect x="231" y="511.4" width="1" height="70.2"/><rect x="232" y="511.6" width="1" height="69.4"/><rect x="233" y="511.8" width="1" height="68.8"/><rect x="234" y="511.7" width="1" height="68.3"/><rect x="235" y="511.7" width="1" height="67.8"/><rect x="236" y="511.4" width="1" height="67.5"/><rect x="237" y="511.3" width="1" height="68"/><rect x="238" y="511.4" width="1" height="68.5"/><rect x="239" y="511.6" width="1" height="69.1"/><rect x="240" y="511.6" width="1" height="69.8"/><rect x="241" y="511.6" width="1" height="70.7"/><rect x="242" y="511.7" width="1" height="71.7"/><rect x="243" y="511.5" width="1" height="72.8"/><rect x="244" y="511.5" width="1" height="74.2"/><rect x="245" y="511.4" width="1" height="75.8"/><rect x="246" y="511" width="1" height="77.7"/><rect x="247" y="510.3" width="1" height="80"/><rect x="248" y="504.7" width="1" height="82.6"/><rect x="249" y="496.7" width="1" height="85.5"/><rect x="250" y="487.7" width="1" height="88.7"/><rect x="251" y="479.1" width="1" height="91.9"/><rect x="252" y="470" width="1" height="94.8"/><rect x="253" y="461.4" width="1" height="96.9"/><rect x="254" y="454.3" width="1" height="97.9"/><rect x="255" y="458.2" width="1" height="97.5"/><rect x="256" y="466.4" width="1" height="95.8"/><rect x="257" y="475.2" width="1" height="93.1"/><rect x="258" y="484.5" width="1" height="90"/><rect x="259" y="493" width="1" height="86.8"/><rect x="260" y="501.7" width="1" height="83.7"/><rect x="261" y="509.1" width="1" height="81"/><rect x="262" y="510.9" width="1" height="78.6"/><rect x="263" y="511.3" width="1" height="76.5"/><rect x="264" y="511.5" width="1" height="74.8"/><rect x="265" y="511.1" width="1" height="73.3"/><rect x="266" y="511.3" width="1" height="72.1"/><rect x="267" y="511.3" width="1" height="71"/><rect x="268" y="511.4" width="1" height="70.1"/><rect x="269" y="511.6" width="1" height="69.4"/><rect x="270" y="511.6" width="1" height="68.7"/><rect x="271" y="511.3" width="1" height="68.2"/><rect x="272" y="511.5" width="1" height="67.7"/><rect x="273" y="511.3" width="1" height="67.3"/><rect x="274" y="511.4" width="1" height="67.3"/><rect x="275" y="511.4" width="1" height="67.8"/><rect x="276" y="511.3" width="1" height="68.3"/><rect x="277" y="511.2" width="1" height="68.9"/><rect x="278" y="511.5" width="1" height="69.7"/><rect x="279" y="511.6" width="1" height="70.5"/><rect x="280" y="511.1" width="1" height="71.5"/><rect x="281" y="511" width="1" height="72.6"/><rect x="282" y="511.2" width="1" height="74"/><rect x="283" y="510.6" width="1" height="75.6"/><rect x="284" y="507.5" width="1" height="77.5"/><rect x="285" y="501.4" width="1" height="79.8"/><rect x="286" y="494.5" width="1" height="82.3"/><rect x="287" y="487.6" width="1" height="85.1"/><rect x="288" y="480.3" width="1" height="88.1"/><rect x="289" y="473.4" width="1" height="91"/><rect x="290" y="466" width="1" height="93.3"/><rect x="291" y="459.5" width="1" height="94.8"/><rect x="292" y="458.4" width="1" height="95.1"/><rect x="293" y="463.6" width="1" height="94.1"/><rect x="294" y="470.1" width="1" height="92"/><rect x="295" y="477.3" width="1" height="89.3"/><rect x="296" y="484.4" width="1" height="86.3"/><rect x="297" y="491.7" width="1" height="83.4"/><rect x="298" y="498.5" width="1" height="80.7"/><rect x="299" y="504.8" width="1" height="78.4"/><rect x="300" y="509.8" width="1" height="76.4"/><rect x="301" y="510.9" width="1" height="74.6"/><rect x="302" y="510.8" width="1" height="73.1"/><rect x="303" y="510.9" width="1" height="71.9"/><rect x="304" y="511.2" width="1" height="70.9"/><rect x="305" y="511.4" width="1" height="70"/><rect x="306" y="511" width="1" height="69.2"/><rect x="307" y="511.3" width="1" height="68.6"/><rect x="308" y="511.2" width="1" height="68"/><rect x="309" y="511" width="1" height="67.5"/><rect x="310" y="511.5" width="1" height="67.1"/><rect x="311" y="511.4" width="1" height="66.7"/><rect x="312" y="511.1" width="1" height="66.4"/><rect x="313" y="511" width="1" height="66.5"/><rect x="314" y="511.3" width="1" height="66.9"/><rect x="315" y="511.4" width="1" height="67.2"/><rect x="316" y="511.4" width="1" height="67.7"/><rect x="317" y="511.3" width="1" height="68.2"/><rect x="318" y="511.4" width="1" height="68.8"/><rect x="319" y="511.4" width="1" height="69.5"/><rect x="320" y="511" width="1" height="70.3"/><rect x="321" y="510.9" width="1" height="71.3"/><rect x="322" y="511" width="1" height="72.4"/><rect x="323" y="510.6" width="1" height="73.8"/><rect x="324" y="510.1" width="1" height="75.4"/><rect x="325" y="506.7" width="1" height="77.3"/><rect x="326" y="501.2" width="1" height="79.5"/><rect x="327" y="494.5" width="1" height="82"/><rect x="328" y="488" width="1" height="84.7"/><rect x="329" y="480.9" width="1" height="87.6"/><rect x="330" y="474.3" width="1" height="90.3"/><rect x="331" y="467.9" width="1" height="92.6"/><rect x="332" y="461.5" width="1" height="93.9"/><rect x="333" y="460.4" width="1" height="94"/><rect x="334" y="466.3" width="1" height="92.9"/><rect x="335" y="472.9" width="1" height="90.8"/><rect x="336" y="479.6" width="1" height="88.2"/><rect x="337" y="486.6" width="1" height="85.3"/><rect x="338" y="493" width="1" height="82.5"/><rect x="339" y="499.8" width="1" height="79.9"/><rect x="340" y="505.6" width="1" height="77.7"/><rect x="341" y="509.7" width="1" height="75.7"/><rect x="342" y="510.6" width="1" height="74.1"/><rect x="343" y="511.1" width="1" height="72.7"/><rect x="344" y="511.2" width="1" height="71.5"/><rect x="345" y="511" width="1" height="70.5"/><rect x="346" y="511.2" width="1" height="69.7"/><rect x="347" y="510.8" width="1" height="68.9"/><rect x="348" y="510.9" width="1" height="68.3"/><rect x="349" y="510.9" width="1" height="67.8"/><rect x="350" y="510.8" width="1" height="67.3"/><rect x="351" y="510.9" width="1" height="66.9"/><rect x="352" y="510.8" width="1" height="67"/><rect x="353" y="510.9" width="1" height="67.3"/><rect x="354" y="511.2" width="1" height="67.8"/><rect x="355" y="511" width="1" height="68.2"/><rect x="356" y="511" width="1" height="68.8"/><rect x="357" y="511.2" width="1" height="69.5"/><rect x="358" y="510.8" width="1" height="70.2"/><rect x="359" y="510.6" width="1" height="71.1"/><rect x="360" y="510.8" width="1" height="72.1"/><rect x="361" y="510.4" width="1" height="73.3"/><rect x="362" y="510.1" width="1" height="74.8"/><rect x="363" y="509" width="1" height="76.5"/><rect x="364" y="502.5" width="1" height="78.5"/><rect x="365" y="495" width="1" height="80.9"/><rect x="366" y="487.5" width="1" height="83.6"/><rect x="367" y="480" width="1" height="86.7"/><rect x="368" y="471.8" width="1" height="90.1"/><rect x="369" y="464.4" width="1" height="93.5"/><rect x="370" y="456.3" width="1" height="96.7"/><rect x="371" y="449.8" width="1" height="99"/><rect x="372" y="448.5" width="1" height="100.2"/><rect x="373" y="448.8" width="1" height="99.9"/><rect x="374" y="452.2" width="1" height="98.2"/><rect x="375" y="459.3" width="1" height="95.5"/><rect x="376" y="467" width="1" height="92.1"/><rect x="377" y="475" width="1" height="88.7"/><rect x="378" y="483.1" width="1" height="85.4"/><rect x="379" y="490.4" width="1" height="82.5"/><rect x="380" y="498" width="1" height="79.9"/><rect x="381" y="505.2" width="1" height="77.7"/><rect x="382" y="509.8" width="1" height="75.8"/><rect x="383" y="510.2" width="1" height="74.2"/><rect x="384" y="510.4" width="1" height="72.8"/><rect x="385" y="510.6" width="1" height="71.7"/><rect x="386" y="510.6" width="1" height="70.7"/><rect x="387" y="510.7" width="1" height="69.9"/><rect x="388" y="511" width="1" height="69.2"/><rect x="389" y="510.8" width="1" height="68.6"/><rect x="390" y="511.1" width="1" height="68"/><rect x="391" y="510.7" width="1" height="68.1"/><rect x="392" y="510.9" width="1" height="68.6"/><rect x="393" y="510.7" width="1" height="69.2"/><rect x="394" y="511" width="1" height="69.9"/><rect x="395" y="511" width="1" height="70.7"/><rect x="396" y="510.7" width="1" height="71.6"/><rect x="397" y="510.5" width="1" height="72.7"/><rect x="398" y="510.6" width="1" height="73.9"/><rect x="399" y="510.4" width="1" height="75.4"/><rect x="400" y="510.3" width="1" height="77.2"/><rect x="401" y="509.6" width="1" height="79.3"/><rect x="402" y="504" width="1" height="81.7"/><rect x="403" y="495.2" width="1" height="84.6"/><rect x="404" y="486.1" width="1" height="87.9"/><rect x="405" y="476.5" width="1" height="91.6"/><rect x="406" y="467" width="1" height="95.5"/><rect x="407" y="457.8" width="1" height="99.3"/><rect x="408" y="448.1" width="1" height="102.6"/><rect x="409" y="440.4" width="1" height="104.9"/><rect x="410" y="439.6" width="1" height="105.6"/><rect x="411" y="441.6" width="1" height="104.5"/><rect x="412" y="450.1" width="1" height="102.1"/><rect x="413" y="459.7" width="1" height="98.6"/><rect x="414" y="468.9" width="1" height="94.7"/><rect x="415" y="478.3" width="1" height="90.8"/><rect x="416" y="488.1" width="1" height="87.2"/><rect x="417" y="497.1" width="1" height="84"/><rect x="418" y="505.4" width="1" height="81.2"/><rect x="419" y="509.8" width="1" height="78.8"/><rect x="420" y="510.3" width="1" height="76.8"/><rect x="421" y="510.4" width="1" height="75.1"/><rect x="422" y="510.4" width="1" height="73.7"/><rect x="423" y="510.8" width="1" height="72.5"/><rect x="424" y="510.7" width="1" height="71.4"/><rect x="425" y="510.9" width="1" height="70.5"/><rect x="426" y="510.5" width="1" height="69.8"/><rect x="427" y="510.8" width="1" height="69.1"/><rect x="428" y="510.4" width="1" height="68.5"/><rect x="429" y="510.6" width="1" height="68"/><rect x="430" y="510.7" width="1" height="67.6"/><rect x="431" y="510.5" width="1" height="68"/><rect x="432" y="510.5" width="1" height="68.5"/><rect x="433" y="510.8" width="1" height="69.1"/><rect x="434" y="510.5" width="1" height="69.7"/><rect x="435" y="510.5" width="1" height="70.5"/><rect x="436" y="510.5" width="1" height="71.4"/><rect x="437" y="510.5" width="1" height="72.5"/><rect x="438" y="510.8" width="1" height="73.7"/><rect x="439" y="510.6" width="1" height="75.2"/><rect x="440" y="510.2" width="1" height="76.9"/><rect x="441" y="510.3" width="1" height="79"/><rect x="442" y="510" width="1" height="81.4"/><rect x="443" y="508.8" width="1" height="84.2"/><rect x="444" y="501.2" width="1" height="87.4"/><rect x="445" y="490.9" width="1" height="91"/><rect x="446" y="480.1" width="1" height="94.8"/><rect x="447" y="468.9" width="1" height="98.4"/><rect x="448" y="457.8" width="1" height="101.4"/><rect x="449" y="447.5" width="1" height="103.2"/><rect x="450" y="444" width="1" height="103.6"/><rect x="451" y="453.3" width="1" height="102.3"/><rect x="452" y="464.4" width="1" height="99.7"/><rect x="453" y="475.7" width="1" height="96.3"/><rect x="454" y="486.7" width="1" height="92.5"/><rect x="455" y="497.2" width="1" height="88.8"/><rect x="456" y="506.3" width="1" height="85.5"/><rect x="457" y="509.4" width="1" height="82.5"/><rect x="458" y="509.9" width="1" height="79.9"/><rect x="459" y="510.1" width="1" height="77.7"/><rect x="460" y="510.2" width="1" height="75.8"/><rect x="461" y="510.6" width="1" height="74.3"/><rect x="462" y="510.4" width="1" height="72.9"/><rect x="463" y="510.3" width="1" height="71.8"/><rect x="464" y="510.3" width="1" height="70.9"/><rect x="465" y="510.7" width="1" height="70"/><rect x="466" y="510.7" width="1" height="69.3"/><rect x="467" y="510.7" width="1" height="68.7"/><rect x="468" y="510.5" width="1" height="68.2"/><rect x="469" y="510.4" width="1" height="67.7"/><rect x="470" y="510.5" width="1" height="67.3"/><rect x="471" y="510.7" width="1" height="67.3"/><rect x="472" y="510.7" width="1" height="67.7"/><rect x="473" y="510.4" width="1" height="68.2"/><rect x="474" y="510.3" width="1" height="68.8"/><rect x="475" y="510.5" width="1" height="69.4"/><rect x="476" y="510.5" width="1" height="70.1"/><rect x="477" y="510.2" width="1" height="71"/><rect x="478" y="510" width="1" height="72"/><rect x="479" y="510.1" width="1" height="73.2"/><rect x="480" y="510.3" width="1" height="74.7"/><rect x="481" y="510" width="1" height="76.4"/><rect x="482" y="508.7" width="1" height="78.3"/><rect x="483" y="502.8" width="1" height="80.7"/><rect x="484" y="494.7" width="1" height="83.4"/><rect x="485" y="486.2" width="1" height="86.5"/><rect x="486" y="477.8" width="1" height="89.8"/><rect x="487" y="469.5" width="1" height="93.2"/><rect x="488" y="461" width="1" height="96.3"/><rect x="489" y="453.1" width="1" height="98.7"/><rect x="490" y="448.6" width="1" height="99.9"/><rect x="491" y="449.3" width="1" height="99.6"/><rect x="492" y="455.6" width="1" height="97.9"/><rect x="493" y="464.2" width="1" height="95.1"/><rect x="494" y="473.1" width="1" height="91.9"/><rect x="495" y="481.7" width="1" height="88.5"/><rect x="496" y="489.9" width="1" height="85.2"/><rect x="497" y="498.3" width="1" height="82.3"/><rect x="498" y="505.9" width="1" height="79.7"/><rect x="499" y="509.4" width="1" height="77.5"/><rect x="500" y="509.9" width="1" height="75.6"/><rect x="501" y="509.8" width="1" height="74.1"/><rect x="502" y="509.9" width="1" height="72.7"/><rect x="503" y="510.2" width="1" height="71.6"/><rect x="504" y="510.1" width="1" height="70.6"/><rect x="505" y="510.1" width="1" height="69.8"/><rect x="506" y="509.8" width="1" height="69.1"/><rect x="507" y="509.7" width="1" height="68.5"/><rect x="508" y="509.4" width="1" height="68"/><rect x="509" y="509.3" width="1" height="67.5"/><rect x="510" y="509.6" width="1" height="67.1"/><rect x="511" y="509.6" width="1" height="66.8"/><rect x="512" y="509.2" width="1" height="66.5"/><rect x="513" y="509.2" width="1" height="66.2"/><rect x="514" y="509.2" width="1" height="66.2"/><rect x="515" y="509.1" width="1" height="66.4"/><rect x="516" y="508.8" width="1" height="66.7"/><rect x="517" y="508.6" width="1" height="67"/><rect x="518" y="508.7" width="1" height="67.4"/><rect x="519" y="508.9" width="1" height="67.8"/><rect x="520" y="508.6" width="1" height="68.2"/><rect x="521" y="508.5" width="1" height="68.8"/><rect x="522" y="508.6" width="1" height="69.4"/><rect x="523" y="508.5" width="1" height="70.1"/><rect x="524" y="508.5" width="1" height="70.9"/><rect x="525" y="508.3" width="1" height="71.8"/><rect x="526" y="508.1" width="1" height="73"/><rect x="527" y="507.7" width="1" height="74.3"/><rect x="528" y="507" width="1" height="75.8"/><rect x="529" y="505" width="1" height="77.7"/><rect x="530" y="497.5" width="1" height="79.8"/><rect x="531" y="489.4" width="1" height="82.4"/><rect x="532" y="481.4" width="1" height="85.4"/><rect x="533" y="473" width="1" height="88.8"/><rect x="534" y="464.3" width="1" height="92.5"/><rect x="535" y="456" width="1" height="96.4"/><rect x="536" y="447.4" width="1" height="100.1"/><rect x="537" y="439.4" width="1" height="103.1"/><rect x="538" y="437.2" width="1" height="104.9"/><rect x="539" y="437" width="1" height="105.1"/><rect x="540" y="437.8" width="1" height="103.6"/><rect x="541" y="445.2" width="1" height="100.8"/><rect x="542" y="453.7" width="1" height="97.2"/><rect x="543" y="462.6" width="1" height="93.3"/><rect x="544" y="471.3" width="1" height="89.5"/><rect x="545" y="479.6" width="1" height="86"/><rect x="546" y="487.8" width="1" height="82.9"/><rect x="547" y="496.1" width="1" height="80.3"/><rect x="548" y="503.4" width="1" height="78.1"/><rect x="549" y="506.4" width="1" height="76.2"/><rect x="550" y="506.9" width="1" height="74.6"/><rect x="551" y="507.5" width="1" height="73.2"/><rect x="552" y="507.4" width="1" height="72.1"/><rect x="553" y="507.6" width="1" height="71.1"/><rect x="554" y="507.5" width="1" height="70.2"/><rect x="555" y="507.7" width="1" height="69.5"/><rect x="556" y="507.7" width="1" height="68.9"/><rect x="557" y="507.4" width="1" height="68.3"/><rect x="558" y="507.5" width="1" height="67.9"/><rect x="559" y="507.6" width="1" height="67.8"/><rect x="560" y="507.7" width="1" height="68.3"/><rect x="561" y="507.6" width="1" height="68.9"/><rect x="562" y="507.4" width="1" height="69.6"/><rect x="563" y="507.3" width="1" height="70.4"/><rect x="564" y="507" width="1" height="71.3"/><rect x="565" y="506.9" width="1" height="72.4"/><rect x="566" y="506.9" width="1" height="73.6"/><rect x="567" y="506.8" width="1" height="75.2"/><rect x="568" y="505.7" width="1" height="76.9"/><rect x="569" y="499.7" width="1" height="79.1"/><rect x="570" y="492.1" width="1" height="81.5"/><rect x="571" y="484.5" width="1" height="84.3"/><rect x="572" y="476.3" width="1" height="87.5"/><rect x="573" y="468.5" width="1" height="90.8"/><rect x="574" y="460.7" width="1" height="94"/><rect x="575" y="452.7" width="1" height="96.8"/><rect x="576" y="447.3" width="1" height="98.5"/><rect x="577" y="446.8" width="1" height="99"/><rect x="578" y="448.5" width="1" height="98"/><rect x="579" y="455.7" width="1" height="95.8"/><rect x="580" y="463.4" width="1" height="92.8"/><rect x="581" y="471.7" width="1" height="89.5"/><rect x="582" y="479.3" width="1" height="86.2"/><rect x="583" y="487.1" width="1" height="83.2"/><rect x="584" y="494.9" width="1" height="80.5"/><rect x="585" y="502.1" width="1" height="78.2"/><rect x="586" y="506.1" width="1" height="76.2"/><rect x="587" y="506.8" width="1" height="74.5"/><rect x="588" y="507" width="1" height="73.1"/><rect x="589" y="507" width="1" height="71.9"/><rect x="590" y="507.2" width="1" height="70.9"/><rect x="591" y="507" width="1" height="70"/><rect x="592" y="507.3" width="1" height="69.3"/><rect x="593" y="507.3" width="1" height="68.7"/><rect x="594" y="507.2" width="1" height="68.1"/><rect x="595" y="507.1" width="1" height="67.6"/><rect x="596" y="507.1" width="1" height="67.2"/><rect x="597" y="507" width="1" height="66.9"/><rect x="598" y="507.1" width="1" height="66.8"/><rect x="599" y="506.9" width="1" height="67.2"/><rect x="600" y="506.9" width="1" height="67.6"/><rect x="601" y="506.9" width="1" height="68.2"/><rect x="602" y="507.1" width="1" height="68.8"/><rect x="603" y="506.9" width="1" height="69.5"/><rect x="604" y="506.6" width="1" height="70.3"/><rect x="605" y="506.6" width="1" height="71.3"/><rect x="606" y="505.4" width="1" height="72.5"/><rect x="607" y="502.8" width="1" height="73.9"/><rect x="608" y="499.3" width="1" height="75.6"/><rect x="609" y="495.1" width="1" height="77.5"/><rect x="610" y="490.5" width="1" height="79.7"/><rect x="611" y="485.7" width="1" height="82.2"/><rect x="612" y="480.3" width="1" height="84.8"/><rect x="613" y="474.8" width="1" height="87.4"/><rect x="614" y="469.4" width="1" height="89.6"/><rect x="615" y="464.2" width="1" height="91.1"/><rect x="616" y="460.5" width="1" height="91.5"/><rect x="617" y="465.1" width="1" height="90.9"/><rect x="618" y="470.7" width="1" height="89.2"/><rect x="619" y="476.3" width="1" height="86.9"/><rect x="620" y="481.5" width="1" height="84.2"/><rect x="621" y="486.8" width="1" height="81.6"/><rect x="622" y="491.5" width="1" height="79.2"/><rect x="623" y="495.7" width="1" height="77.1"/><rect x="624" y="500" width="1" height="75.2"/><rect x="625" y="503.2" width="1" height="73.6"/><rect x="626" y="505.6" width="1" height="72.3"/><rect x="627" y="505.9" width="1" height="71.1"/><rect x="628" y="506.2" width="1" height="70.2"/><rect x="629" y="506.3" width="1" height="69.3"/><rect x="630" y="506.4" width="1" height="68.6"/><rect x="631" y="506.5" width="1" height="68"/><rect x="632" y="506.6" width="1" height="67.5"/><rect x="633" y="505.9" width="1" height="68"/><rect x="634" y="504.1" width="1" height="68.7"/><rect x="635" y="501.3" width="1" height="69.6"/><rect x="636" y="498.9" width="1" height="70.6"/><rect x="637" y="496.4" width="1" height="71.8"/><rect x="638" y="493.4" width="1" height="73"/><rect x="639" y="491" width="1" height="74.3"/><rect x="640" y="488.4" width="1" height="75.5"/><rect x="641" y="485.7" width="1" height="76.4"/><rect x="642" y="483.3" width="1" height="76.9"/><rect x="643" y="483.7" width="1" height="76.9"/><rect x="644" y="486" width="1" height="76.3"/><rect x="645" y="488.8" width="1" height="75.3"/><rect x="646" y="491.1" width="1" height="74"/><rect x="647" y="493.7" width="1" height="72.8"/><rect x="648" y="496.6" width="1" height="71.5"/><rect x="649" y="499.4" width="1" height="70.4"/><rect x="650" y="501.9" width="1" height="69.4"/><rect x="651" y="504.5" width="1" height="68.6"/><rect x="652" y="506.3" width="1" height="67.8"/><rect x="653" y="506.4" width="1" height="67.2"/><rect x="654" y="506.4" width="1" height="66.7"/><rect x="655" y="506.3" width="1" height="66.3"/><rect x="656" y="506.4" width="1" height="65.9"/><rect x="657" y="506.6" width="1" height="66"/><rect x="658" y="506.5" width="1" height="66.3"/><rect x="659" y="506.3" width="1" height="66.7"/><rect x="660" y="506.2" width="1" height="67.1"/><rect x="661" y="506.3" width="1" height="67.6"/><rect x="662" y="506.1" width="1" height="68.2"/><rect x="663" y="506.1" width="1" height="68.8"/><rect x="664" y="506.2" width="1" height="69.6"/><rect x="665" y="506.1" width="1" height="70.6"/><rect x="666" y="505.6" width="1" height="71.7"/><rect x="667" y="505" width="1" height="73"/><rect x="668" y="503.5" width="1" height="74.5"/><rect x="669" y="501.4" width="1" height="76.3"/><rect x="670" y="498.2" width="1" height="78.3"/><rect x="671" y="493.8" width="1" height="80.4"/><rect x="672" y="488.6" width="1" height="82.4"/><rect x="673" y="482.7" width="1" height="84.2"/><rect x="674" y="475.5" width="1" height="85.4"/><rect x="675" y="470.6" width="1" height="85.8"/><rect x="676" y="476.7" width="1" height="85.2"/><rect x="677" y="484" width="1" height="83.9"/><rect x="678" y="489.7" width="1" height="82"/><rect x="679" y="494.9" width="1" height="79.9"/><rect x="680" y="498.9" width="1" height="77.9"/><rect x="681" y="501.6" width="1" height="75.9"/><rect x="682" y="503.7" width="1" height="74.2"/><rect x="683" y="504.7" width="1" height="72.7"/><rect x="684" y="505.3" width="1" height="71.5"/><rect x="685" y="505.7" width="1" height="70.4"/><rect x="686" y="505.8" width="1" height="69.5"/><rect x="687" y="505.8" width="1" height="68.7"/><rect x="688" y="506.1" width="1" height="68.1"/><rect x="689" y="505.9" width="1" height="67.5"/><rect x="690" y="505.7" width="1" height="67"/><rect x="691" y="505.7" width="1" height="67.2"/><rect x="692" y="505.6" width="1" height="67.8"/><rect x="693" y="505.8" width="1" height="68.4"/><rect x="694" y="505.8" width="1" height="69.2"/><rect x="695" y="504.8" width="1" height="70.1"/><rect x="696" y="503.2" width="1" height="71.1"/><rect x="697" y="501" width="1" height="72.3"/><rect x="698" y="498.7" width="1" height="73.8"/><rect x="699" y="495.5" width="1" height="75.4"/><rect x="700" y="492.1" width="1" height="77.1"/><rect x="701" y="488.1" width="1" height="78.9"/><rect x="702" y="483.7" width="1" height="80.4"/><rect x="703" y="479" width="1" height="81.5"/><rect x="704" y="475.5" width="1" height="82"/><rect x="705" y="478.2" width="1" height="81.7"/><rect x="706" y="482.8" width="1" height="80.7"/><rect x="707" y="486.9" width="1" height="79.2"/><rect x="708" y="491" width="1" height="77.5"/><rect x="709" y="494.8" width="1" height="75.7"/><rect x="710" y="497.8" width="1" height="74.1"/><rect x="711" y="500.7" width="1" height="72.6"/><rect x="712" y="503" width="1" height="71.3"/><rect x="713" y="504.6" width="1" height="70.2"/><rect x="714" y="505.3" width="1" height="69.3"/><rect x="715" y="505.4" width="1" height="68.5"/><rect x="716" y="505.6" width="1" height="67.9"/><rect x="717" y="505.7" width="1" height="67.3"/><rect x="718" y="505.4" width="1" height="66.8"/><rect x="719" y="505.6" width="1" height="66.4"/><rect x="720" y="505.8" width="1" height="66.1"/><rect x="721" y="505.5" width="1" height="65.9"/><rect x="722" y="505.8" width="1" height="66.3"/><rect x="723" y="505.7" width="1" height="66.8"/><rect x="724" y="505.8" width="1" height="67.3"/><rect x="725" y="505.6" width="1" height="67.9"/><rect x="726" y="505" width="1" height="68.6"/><rect x="727" y="502.8" width="1" height="69.5"/><rect x="728" y="499.9" width="1" height="70.5"/><rect x="729" y="496.7" width="1" height="71.6"/><rect x="730" y="493.3" width="1" height="72.8"/><rect x="731" y="490.3" width="1" height="74.1"/><rect x="732" y="487.3" width="1" height="75.2"/><rect x="733" y="484.5" width="1" height="76"/><rect x="734" y="482.9" width="1" height="76.4"/><rect x="735" y="483" width="1" height="76.2"/><rect x="736" y="485.7" width="1" height="75.5"/><rect x="737" y="489" width="1" height="74.5"/><rect x="738" y="492.4" width="1" height="73.3"/><rect x="739" y="495.3" width="1" height="72.1"/><rect x="740" y="498.3" width="1" height="70.9"/><rect x="741" y="501.1" width="1" height="69.9"/><rect x="742" y="504.2" width="1" height="69"/><rect x="743" y="505.2" width="1" height="68.2"/><rect x="744" y="505.2" width="1" height="67.5"/><rect x="745" y="505.3" width="1" height="67"/><rect x="746" y="505.6" width="1" height="66.5"/><rect x="747" y="505.6" width="1" height="66.1"/><rect x="748" y="505.2" width="1" height="65.9"/><rect x="749" y="505.2" width="1" height="66.1"/><rect x="750" y="505.2" width="1" height="66.3"/><rect x="751" y="505.6" width="1" height="66.6"/><rect x="752" y="505.6" width="1" height="67"/><rect x="753" y="505.2" width="1" height="67.4"/><rect x="754" y="505.3" width="1" height="67.8"/><rect x="755" y="505.6" width="1" height="68.3"/><rect x="756" y="505.5" width="1" height="68.9"/><rect x="757" y="505.6" width="1" height="69.5"/><rect x="758" y="505.3" width="1" height="70.3"/><rect x="759" y="505.2" width="1" height="71.2"/><rect x="760" y="505.5" width="1" height="72.2"/><rect x="761" y="504.9" width="1" height="73.5"/><rect x="762" y="504.8" width="1" height="75"/><rect x="763" y="504.8" width="1" height="76.7"/><rect x="764" y="504.5" width="1" height="78.8"/><rect x="765" y="503.4" width="1" height="81.2"/><rect x="766" y="496.9" width="1" height="84"/><rect x="767" y="487.1" width="1" height="87.1"/><rect x="768" y="476.9" width="1" height="90.5"/><rect x="769" y="466.7" width="1" height="93.8"/><rect x="770" y="456.5" width="1" height="96.7"/><rect x="771" y="446.9" width="1" height="98.7"/><rect x="772" y="443" width="1" height="99.4"/><rect x="773" y="447" width="1" height="98.7"/><rect x="774" y="455.9" width="1" height="96.7"/><rect x="775" y="466.2" width="1" height="93.8"/><rect x="776" y="476" width="1" height="90.5"/><rect x="777" y="485.7" width="1" height="87.1"/><rect x="778" y="494.8" width="1" height="84"/><rect x="779" y="501" width="1" height="81.2"/><rect x="780" y="501.7" width="1" height="78.8"/><rect x="781" y="501.7" width="1" height="76.7"/><rect x="782" y="502" width="1" height="75"/><rect x="783" y="501.6" width="1" height="73.5"/><rect x="784" y="501.5" width="1" height="72.2"/><rect x="785" y="501.3" width="1" height="71.2"/><rect x="786" y="501.1" width="1" height="70.3"/><rect x="787" y="501.3" width="1" height="69.5"/><rect x="788" y="501.1" width="1" height="68.9"/><rect x="789" y="500.8" width="1" height="68.3"/><rect x="790" y="500.8" width="1" height="67.8"/><rect x="791" y="501" width="1" height="67.4"/><rect x="792" y="500.6" width="1" height="67"/><rect x="793" y="501" width="1" height="66.6"/><rect x="794" y="500.9" width="1" height="66.3"/><rect x="795" y="501" width="1" height="66.1"/><rect x="796" y="500.8" width="1" height="65.9"/><rect x="797" y="499.7" width="1" height="65.8"/><rect x="798" y="498.3" width="1" height="66.1"/><rect x="799" y="496.9" width="1" height="66.3"/><rect x="800" y="495.5" width="1" height="66.6"/><rect x="801" y="495.3" width="1" height="66.9"/><rect x="802" y="496.8" width="1" height="67.3"/><rect x="803" y="498.1" width="1" height="67.7"/><rect x="804" y="499.7" width="1" height="68.2"/><rect x="805" y="500.3" width="1" height="68.8"/><rect x="806" y="500.7" width="1" height="69.4"/><rect x="807" y="500.7" width="1" height="70.2"/><rect x="808" y="500.7" width="1" height="71.1"/><rect x="809" y="500.6" width="1" height="72.1"/><rect x="810" y="500.3" width="1" height="73.4"/><rect x="811" y="500.2" width="1" height="74.8"/><rect x="812" y="499" width="1" height="76.5"/><rect x="813" y="493.5" width="1" height="78.6"/><rect x="814" y="486.4" width="1" height="80.9"/><rect x="815" y="478.8" width="1" height="83.7"/><rect x="816" y="471.2" width="1" height="86.8"/><rect x="817" y="463.3" width="1" height="90.1"/><rect x="818" y="455.7" width="1" height="93.4"/><rect x="819" y="448.1" width="1" height="96.4"/><rect x="820" y="441" width="1" height="98.5"/><rect x="821" y="439.6" width="1" height="99.4"/><rect x="822" y="439.9" width="1" height="98.8"/><rect x="823" y="446" width="1" height="96.9"/><rect x="824" y="453.7" width="1" height="94.1"/><rect x="825" y="461.7" width="1" height="90.8"/><rect x="826" y="469.2" width="1" height="87.4"/><rect x="827" y="476.9" width="1" height="84.3"/><rect x="828" y="484.7" width="1" height="81.5"/><rect x="829" y="492" width="1" height="79"/><rect x="830" y="498.5" width="1" height="76.9"/><rect x="831" y="499.8" width="1" height="75.1"/><rect x="832" y="499.8" width="1" height="73.6"/><rect x="833" y="500.3" width="1" height="72.4"/><rect x="834" y="500.1" width="1" height="71.3"/><rect x="835" y="500.2" width="1" height="70.4"/><rect x="836" y="500.5" width="1" height="69.6"/><rect x="837" y="500.2" width="1" height="68.9"/><rect x="838" y="500.2" width="1" height="68.3"/><rect x="839" y="500.5" width="1" height="67.8"/><rect x="840" y="500.5" width="1" height="67.4"/><rect x="841" y="500.4" width="1" height="67"/><rect x="842" y="500.3" width="1" height="66.7"/><rect x="843" y="500.4" width="1" height="66.4"/><rect x="844" y="500.2" width="1" height="66.1"/><rect x="845" y="500.1" width="1" height="65.9"/><rect x="846" y="499.9" width="1" height="65.7"/><rect x="847" y="500.1" width="1" height="66"/><rect x="848" y="500" width="1" height="66.4"/><rect x="849" y="500.3" width="1" height="66.8"/><rect x="850" y="500.2" width="1" height="67.3"/><rect x="851" y="500.3" width="1" height="67.9"/><rect x="852" y="499.9" width="1" height="68.6"/><rect x="853" y="500.1" width="1" height="69.5"/><rect x="854" y="500.2" width="1" height="70.5"/><rect x="855" y="499.6" width="1" height="71.6"/><rect x="856" y="497.2" width="1" height="72.9"/><rect x="857" y="492.7" width="1" height="74.2"/><rect x="858" y="488.2" width="1" height="75.6"/><rect x="859" y="483.3" width="1" height="76.7"/><rect x="860" y="478.5" width="1" height="77.4"/><rect x="861" y="476.5" width="1" height="77.6"/><rect x="862" y="480.6" width="1" height="77.1"/><rect x="863" y="485.6" width="1" height="76.3"/><rect x="864" y="490.6" width="1" height="75"/><rect x="865" y="495.3" width="1" height="73.7"/><rect x="866" y="499.2" width="1" height="72.4"/><rect x="867" y="500.3" width="1" height="71.2"/><rect x="868" y="500.5" width="1" height="70.1"/><rect x="869" y="500.8" width="1" height="69.1"/><rect x="870" y="500.7" width="1" height="68.3"/><rect x="871" y="500.8" width="1" height="67.7"/><rect x="872" y="500.9" width="1" height="67.1"/><rect x="873" y="501.3" width="1" height="67"/><rect x="874" y="501" width="1" height="67.4"/><rect x="875" y="501.2" width="1" height="67.8"/><rect x="876" y="501.1" width="1" height="68.4"/><rect x="877" y="501.5" width="1" height="69"/><rect x="878" y="501.2" width="1" height="69.7"/><rect x="879" y="501.2" width="1" height="70.5"/><rect x="880" y="501.3" width="1" height="71.5"/><rect x="881" y="500.3" width="1" height="72.7"/><rect x="882" y="496.2" width="1" height="74.1"/><rect x="883" y="491.2" width="1" height="75.8"/><rect x="884" y="486.2" width="1" height="77.7"/><rect x="885" y="480.9" width="1" height="80"/><rect x="886" y="475.6" width="1" height="82.5"/><rect x="887" y="470.5" width="1" height="85.4"/><rect x="888" y="465" width="1" height="88.3"/><rect x="889" y="459.6" width="1" height="91"/><rect x="890" y="454.5" width="1" height="93.2"/><rect x="891" y="450.5" width="1" height="94.4"/><rect x="892" y="450.3" width="1" height="94.4"/><rect x="893" y="454.9" width="1" height="93.2"/><rect x="894" y="460.5" width="1" height="91"/><rect x="895" y="465.9" width="1" height="88.3"/><rect x="896" y="471.1" width="1" height="85.4"/><rect x="897" y="476.5" width="1" height="82.5"/><rect x="898" y="482.3" width="1" height="80"/><rect x="899" y="487.8" width="1" height="77.7"/><rect x="900" y="492.9" width="1" height="75.8"/><rect x="901" y="498" width="1" height="74.1"/><rect x="902" y="502.6" width="1" height="72.7"/><rect x="903" y="503.6" width="1" height="71.5"/><rect x="904" y="503.8" width="1" height="70.5"/><rect x="905" y="504.1" width="1" height="69.7"/><rect x="906" y="504.5" width="1" height="69"/><rect x="907" y="504.6" width="1" height="68.4"/><rect x="908" y="504.9" width="1" height="67.8"/><rect x="909" y="505" width="1" height="67.4"/><rect x="910" y="505.4" width="1" height="67"/><rect x="911" y="505.4" width="1" height="66.6"/><rect x="912" y="505.8" width="1" height="66.3"/><rect x="913" y="505.7" width="1" height="66"/><rect x="914" y="506.2" width="1" height="65.8"/><rect x="915" y="506.6" width="1" height="65.7"/><rect x="916" y="506.5" width="1" height="65.9"/><rect x="917" y="506.3" width="1" height="66.1"/><rect x="918" y="505.7" width="1" height="66.4"/><rect x="919" y="505.6" width="1" height="66.7"/><rect x="920" y="506.5" width="1" height="67.1"/><rect x="921" y="507.3" width="1" height="67.5"/><rect x="922" y="507.5" width="1" height="68"/><rect x="923" y="507.6" width="1" height="68.5"/><rect x="924" y="508.2" width="1" height="69.2"/><rect x="925" y="508.4" width="1" height="69.9"/><rect x="926" y="508.4" width="1" height="70.8"/><rect x="927" y="508.4" width="1" height="71.8"/><rect x="928" y="508.6" width="1" height="73"/><rect x="929" y="508.2" width="1" height="74.4"/><rect x="930" y="504.1" width="1" height="76.1"/><rect x="931" y="494.8" width="1" height="78.1"/><rect x="932" y="484.8" width="1" height="80.4"/><rect x="933" y="474" width="1" height="83.1"/><rect x="934" y="463.7" width="1" height="86"/><rect x="935" y="455.9" width="1" height="89"/><rect x="936" y="455.4" width="1" height="91.9"/><rect x="937" y="455.5" width="1" height="94.3"/><rect x="938" y="455.9" width="1" height="95.7"/><rect x="939" y="455.8" width="1" height="95.8"/><rect x="940" y="455.8" width="1" height="94.6"/><rect x="941" y="456.2" width="1" height="92.4"/><rect x="942" y="457.2" width="1" height="89.6"/><rect x="943" y="463.9" width="1" height="86.6"/><rect x="944" y="474.7" width="1" height="83.6"/><rect x="945" y="488.7" width="1" height="80.9"/><rect x="946" y="503.1" width="1" height="78.5"/><rect x="947" y="516.4" width="1" height="76.5"/><rect x="948" y="525.5" width="1" height="74.7"/><rect x="949" y="527.4" width="1" height="73.3"/><rect x="950" y="528.2" width="1" height="72"/><rect x="951" y="529" width="1" height="71"/><rect x="952" y="529.7" width="1" height="70.1"/><rect x="953" y="530.6" width="1" height="69.3"/><rect x="954" y="531.3" width="1" height="68.6"/><rect x="955" y="532.1" width="1" height="68.1"/><rect x="956" y="532.8" width="1" height="67.6"/><rect x="957" y="533" width="1" height="67.2"/><rect x="958" y="533.4" width="1" height="66.8"/><rect x="959" y="534.2" width="1" height="66.5"/><rect x="960" y="534.6" width="1" height="66.2"/><rect x="961" y="535.1" width="1" height="65.9"/><rect x="962" y="535.4" width="1" height="65.7"/><rect x="963" y="535.8" width="1" height="65.5"/><rect x="964" y="536.2" width="1" height="65.3"/><rect x="965" y="536.8" width="1" height="65.2"/><rect x="966" y="537.1" width="1" height="65"/><rect x="967" y="537.5" width="1" height="64.9"/><rect x="968" y="537.8" width="1" height="64.8"/><rect x="969" y="537.8" width="1" height="64.7"/><rect x="970" y="538.2" width="1" height="64.6"/><rect x="971" y="538.6" width="1" height="64.5"/><rect x="972" y="538.7" width="1" height="64.4"/><rect x="973" y="538.8" width="1" height="64.3"/><rect x="974" y="539.1" width="1" height="64.2"/><rect x="975" y="539.5" width="1" height="64.2"/><rect x="976" y="539.7" width="1" height="64.1"/><rect x="977" y="539.8" width="1" height="64.1"/><rect x="978" y="540.1" width="1" height="64"/><rect x="979" y="540.3" width="1" height="64"/><rect x="980" y="540.6" width="1" height="63.9"/><rect x="981" y="540.7" width="1" height="63.9"/><rect x="982" y="540.7" width="1" height="63.8"/><rect x="983" y="540.7" width="1" height="63.8"/><rect x="984" y="540.8" width="1" height="63.8"/><rect x="985" y="541.2" width="1" height="63.7"/><rect x="986" y="541.3" width="1" height="63.7"/><rect x="987" y="540.9" width="1" height="63.7"/><rect x="988" y="540.9" width="1" height="63.6"/><rect x="989" y="541.2" width="1" height="63.6"/><rect x="990" y="541.2" width="1" height="63.6"/><rect x="991" y="541.4" width="1" height="63.6"/><rect x="992" y="541.5" width="1" height="63.6"/><rect x="993" y="541.4" width="1" height="63.5"/><rect x="994" y="541.2" width="1" height="63.5"/><rect x="995" y="541.5" width="1" height="63.5"/><rect x="996" y="541.2" width="1" height="63.5"/><rect x="997" y="541.3" width="1" height="63.5"/><rect x="998" y="541.4" width="1" height="63.5"/><rect x="999" y="541.3" width="1" height="63.4"/><rect x="1000" y="541.7" width="1" height="63.4"/><rect x="1001" y="541.9" width="1" height="63.4"/><rect x="1002" y="541.8" width="1" height="63.4"/><rect x="1003" y="541.7" width="1" height="63.4"/><rect x="1004" y="541.7" width="1" height="63.4"/><rect x="1005" y="542" width="1" height="63.4"/><rect x="1006" y="541.8" width="1" height="63.4"/><rect x="1007" y="542" width="1" height="63.3"/><rect x="1008" y="541.7" width="1" height="63.3"/><rect x="1009" y="541.7" width="1" height="63.3"/><rect x="1010" y="541.9" width="1" height="63.3"/><rect x="1011" y="542.2" width="1" height="63.3"/><rect x="1012" y="542.2" width="1" height="63.3"/><rect x="1013" y="542.3" width="1" height="63.3"/><rect x="1014" y="542.1" width="1" height="63.3"/><rect x="1015" y="542.5" width="1" height="63.3"/><rect x="1016" y="542.6" width="1" height="63.3"/></g><g fill="url(#u)"><rect x="41" y="484.3" width="1" height="59.3"/><rect x="42" y="485.6" width="1" height="58"/><rect x="43" y="485.6" width="1" height="58.1"/><rect x="44" y="483.2" width="1" height="60.7"/><rect x="45" y="482.5" width="1" height="61.3"/><rect x="46" y="482.3" width="1" height="61.4"/><rect x="47" y="483.8" width="1" height="60.2"/><rect x="48" y="483" width="1" height="60.8"/><rect x="49" y="484.9" width="1" height="59.1"/><rect x="50" y="485.8" width="1" height="58"/><rect x="51" y="487.5" width="1" height="56.1"/><rect x="52" y="487.6" width="1" height="56.1"/><rect x="53" y="484.6" width="1" height="59"/><rect x="54" y="484.2" width="1" height="59.8"/><rect x="55" y="483.5" width="1" height="60.4"/><rect x="56" y="485.4" width="1" height="58.4"/><rect x="57" y="485.4" width="1" height="58.2"/><rect x="58" y="483.3" width="1" height="60.3"/><rect x="59" y="485.4" width="1" height="58.3"/><rect x="60" y="484.3" width="1" height="59.5"/><rect x="61" y="484.7" width="1" height="59.1"/><rect x="62" y="486.4" width="1" height="57.5"/><rect x="63" y="484.4" width="1" height="59.5"/><rect x="64" y="485.1" width="1" height="58.9"/><rect x="65" y="486.5" width="1" height="57.2"/><rect x="66" y="487.8" width="1" height="55.8"/><rect x="67" y="485.8" width="1" height="58.1"/><rect x="68" y="483.7" width="1" height="60.1"/><rect x="69" y="482.5" width="1" height="61.4"/><rect x="70" y="485.6" width="1" height="58.3"/><rect x="71" y="486.9" width="1" height="56.8"/><rect x="72" y="486.7" width="1" height="57.1"/><rect x="73" y="486.2" width="1" height="57.6"/><rect x="74" y="487.1" width="1" height="56.9"/><rect x="75" y="485.7" width="1" height="58.2"/><rect x="76" y="483.4" width="1" height="60.6"/><rect x="77" y="485.3" width="1" height="58.7"/><rect x="78" y="486.8" width="1" height="56.9"/><rect x="79" y="485.1" width="1" height="58.7"/><rect x="80" y="483.1" width="1" height="60.6"/><rect x="81" y="482.9" width="1" height="60.6"/><rect x="82" y="482.4" width="1" height="61.5"/><rect x="83" y="482.5" width="1" height="61.2"/><rect x="84" y="483.8" width="1" height="60.1"/><rect x="85" y="482.7" width="1" height="61.1"/><rect x="86" y="484.6" width="1" height="59.3"/><rect x="87" y="486.6" width="1" height="57.4"/><rect x="88" y="484.6" width="1" height="59.1"/><rect x="89" y="484.5" width="1" height="59.3"/><rect x="90" y="487.4" width="1" height="56"/><rect x="91" y="484.8" width="1" height="58.5"/><rect x="92" y="475.8" width="1" height="67"/><rect x="93" y="468.4" width="1" height="69.9"/><rect x="94" y="456.7" width="1" height="71.4"/><rect x="95" y="442.3" width="1" height="74"/><rect x="96" y="424.6" width="1" height="80"/><rect x="97" y="412.7" width="1" height="80"/><rect x="98" y="381.4" width="1" height="102.5"/><rect x="99" y="407.9" width="1" height="82.5"/><rect x="100" y="417.3" width="1" height="83.1"/><rect x="101" y="428.3" width="1" height="82.4"/><rect x="102" y="441.7" width="1" height="79.3"/><rect x="103" y="451.7" width="1" height="78.4"/><rect x="104" y="445.9" width="1" height="87.6"/><rect x="105" y="451.6" width="1" height="82.4"/><rect x="106" y="461.4" width="1" height="72"/><rect x="107" y="471.6" width="1" height="61.1"/><rect x="108" y="476.3" width="1" height="55.8"/><rect x="109" y="472.7" width="1" height="59"/><rect x="110" y="473.1" width="1" height="57.5"/><rect x="111" y="471.5" width="1" height="58.3"/><rect x="112" y="470.2" width="1" height="59.4"/><rect x="113" y="471.6" width="1" height="57.5"/><rect x="114" y="468.5" width="1" height="59.9"/><rect x="115" y="466.5" width="1" height="61.5"/><rect x="116" y="467.5" width="1" height="60"/><rect x="117" y="466.1" width="1" height="60.7"/><rect x="118" y="467.3" width="1" height="59.4"/><rect x="119" y="467.7" width="1" height="58.4"/><rect x="120" y="467.1" width="1" height="58.7"/><rect x="121" y="463.8" width="1" height="61.6"/><rect x="122" y="462.4" width="1" height="62.6"/><rect x="123" y="459.4" width="1" height="65.3"/><rect x="124" y="459.3" width="1" height="65.4"/><rect x="125" y="461.9" width="1" height="62.5"/><rect x="126" y="462.5" width="1" height="61.8"/><rect x="127" y="462.6" width="1" height="60.9"/><rect x="128" y="445.7" width="1" height="77.2"/><rect x="129" y="442.8" width="1" height="77.8"/><rect x="130" y="431.7" width="1" height="80.3"/><rect x="131" y="419" width="1" height="82.6"/><rect x="132" y="410" width="1" height="81"/><rect x="133" y="402.3" width="1" height="78"/><rect x="134" y="399.5" width="1" height="70"/><rect x="135" y="393.2" width="1" height="65.5"/><rect x="136" y="387.9" width="1" height="60.1"/><rect x="137" y="354.9" width="1" height="88"/><rect x="138" y="388.3" width="1" height="58.6"/><rect x="139" y="391.9" width="1" height="63.6"/><rect x="140" y="395.7" width="1" height="69.4"/><rect x="141" y="404.2" width="1" height="70.6"/><rect x="142" y="412" width="1" height="72.3"/><rect x="143" y="418.7" width="1" height="74.8"/><rect x="144" y="429.6" width="1" height="73.2"/><rect x="145" y="435.4" width="1" height="75.6"/><rect x="146" y="445" width="1" height="67.9"/><rect x="147" y="453.2" width="1" height="59.6"/><rect x="148" y="454.1" width="1" height="58.6"/><rect x="149" y="452.5" width="1" height="60"/><rect x="150" y="449.8" width="1" height="62.7"/><rect x="151" y="449.3" width="1" height="63"/><rect x="152" y="452.3" width="1" height="60.1"/><rect x="153" y="451.5" width="1" height="61.1"/><rect x="154" y="451.7" width="1" height="60.8"/><rect x="155" y="451.6" width="1" height="60.9"/><rect x="156" y="452.8" width="1" height="59.6"/><rect x="157" y="452.4" width="1" height="60.1"/><rect x="158" y="450.7" width="1" height="62"/><rect x="159" y="451.1" width="1" height="61.5"/><rect x="160" y="452.4" width="1" height="60.3"/><rect x="161" y="451.7" width="1" height="60.9"/><rect x="162" y="451.6" width="1" height="60.9"/><rect x="163" y="452.3" width="1" height="60"/><rect x="164" y="451.9" width="1" height="60.4"/><rect x="165" y="453.9" width="1" height="58.4"/><rect x="166" y="444.8" width="1" height="67"/><rect x="167" y="432" width="1" height="78.9"/><rect x="168" y="419.3" width="1" height="84.2"/><rect x="169" y="403.4" width="1" height="91.3"/><rect x="170" y="391.3" width="1" height="94.8"/><rect x="171" y="380" width="1" height="96.8"/><rect x="172" y="375.8" width="1" height="92"/><rect x="173" y="373.9" width="1" height="84.3"/><rect x="174" y="372.1" width="1" height="77.3"/><rect x="175" y="358.9" width="1" height="83.5"/><rect x="176" y="354.8" width="1" height="87.2"/><rect x="177" y="368.4" width="1" height="79.2"/><rect x="178" y="370.3" width="1" height="86"/><rect x="179" y="374" width="1" height="91.4"/><rect x="180" y="378.6" width="1" height="96.4"/><rect x="181" y="386.9" width="1" height="96.9"/><rect x="182" y="400.4" width="1" height="92.4"/><rect x="183" y="418.6" width="1" height="83.4"/><rect x="184" y="426.7" width="1" height="82.9"/><rect x="185" y="440.3" width="1" height="71.2"/><rect x="186" y="449.6" width="1" height="62.4"/><rect x="187" y="450.3" width="1" height="61.6"/><rect x="188" y="452.9" width="1" height="59.3"/><rect x="189" y="453.3" width="1" height="58.8"/><rect x="190" y="453.7" width="1" height="58.4"/><rect x="191" y="453.9" width="1" height="58.4"/><rect x="192" y="451.3" width="1" height="61.1"/><rect x="193" y="453.2" width="1" height="59.1"/><rect x="194" y="450.3" width="1" height="62.1"/><rect x="195" y="449.8" width="1" height="62.3"/><rect x="196" y="449.2" width="1" height="62.9"/><rect x="197" y="449.4" width="1" height="62.8"/><rect x="198" y="449.6" width="1" height="62.9"/><rect x="199" y="449.8" width="1" height="62.6"/><rect x="200" y="449.3" width="1" height="63"/><rect x="201" y="448.4" width="1" height="63.9"/><rect x="202" y="447.9" width="1" height="64.5"/><rect x="203" y="450.3" width="1" height="61.9"/><rect x="204" y="450.9" width="1" height="61.6"/><rect x="205" y="449.5" width="1" height="62.9"/><rect x="206" y="450.6" width="1" height="61.5"/><rect x="207" y="449.6" width="1" height="62.4"/><rect x="208" y="424.4" width="1" height="87"/><rect x="209" y="421.3" width="1" height="87.1"/><rect x="210" y="420.2" width="1" height="79.2"/><rect x="211" y="415.8" width="1" height="73.8"/><rect x="212" y="394.5" width="1" height="84.5"/><rect x="213" y="387.2" width="1" height="81.5"/><rect x="214" y="375.3" width="1" height="82.8"/><rect x="215" y="364.5" width="1" height="84"/><rect x="216" y="354" width="1" height="91.7"/><rect x="217" y="371.8" width="1" height="82.4"/><rect x="218" y="384.3" width="1" height="80"/><rect x="219" y="397.9" width="1" height="77"/><rect x="220" y="412.4" width="1" height="72.7"/><rect x="221" y="425.8" width="1" height="69.7"/><rect x="222" y="439" width="1" height="66"/><rect x="223" y="442.4" width="1" height="68.4"/><rect x="224" y="446.7" width="1" height="65.2"/><rect x="225" y="453.4" width="1" height="58.6"/><rect x="226" y="451.2" width="1" height="61.2"/><rect x="227" y="449.7" width="1" height="62.6"/><rect x="228" y="451.2" width="1" height="60.8"/><rect x="229" y="452.9" width="1" height="59.5"/><rect x="230" y="452.5" width="1" height="59.8"/><rect x="231" y="453" width="1" height="59.1"/><rect x="232" y="452.1" width="1" height="60.1"/><rect x="233" y="452.9" width="1" height="59.5"/><rect x="234" y="453.2" width="1" height="59.1"/><rect x="235" y="453.8" width="1" height="58.5"/><rect x="236" y="453.1" width="1" height="58.9"/><rect x="237" y="449.6" width="1" height="62.4"/><rect x="238" y="450.1" width="1" height="61.9"/><rect x="239" y="452.4" width="1" height="59.8"/><rect x="240" y="452" width="1" height="60.3"/><rect x="241" y="452.2" width="1" height="60"/><rect x="242" y="449.2" width="1" height="63.1"/><rect x="243" y="451.6" width="1" height="60.5"/><rect x="244" y="451.4" width="1" height="60.7"/><rect x="245" y="449.6" width="1" height="62.4"/><rect x="246" y="444.7" width="1" height="66.9"/><rect x="247" y="434.7" width="1" height="76.2"/><rect x="248" y="431.2" width="1" height="74.1"/><rect x="249" y="419" width="1" height="78.3"/><rect x="250" y="406.6" width="1" height="81.7"/><rect x="251" y="394.7" width="1" height="85"/><rect x="252" y="387.2" width="1" height="83.4"/><rect x="253" y="381.7" width="1" height="80.2"/><rect x="254" y="365.8" width="1" height="89.1"/><rect x="255" y="378.8" width="1" height="80"/><rect x="256" y="385.7" width="1" height="81.3"/><rect x="257" y="393.2" width="1" height="82.6"/><rect x="258" y="402.8" width="1" height="82.3"/><rect x="259" y="412.5" width="1" height="81.1"/><rect x="260" y="425.3" width="1" height="77"/><rect x="261" y="433.8" width="1" height="76"/><rect x="262" y="441.9" width="1" height="69.6"/><rect x="263" y="452.5" width="1" height="59.4"/><rect x="264" y="450.2" width="1" height="61.9"/><rect x="265" y="450.7" width="1" height="61.1"/><rect x="266" y="448.7" width="1" height="63.3"/><rect x="267" y="449.9" width="1" height="62.1"/><rect x="268" y="449.2" width="1" height="62.8"/><rect x="269" y="449.5" width="1" height="62.7"/><rect x="270" y="448.4" width="1" height="63.7"/><rect x="271" y="451.5" width="1" height="60.3"/><rect x="272" y="453.1" width="1" height="59"/><rect x="273" y="453.6" width="1" height="58.3"/><rect x="274" y="451.3" width="1" height="60.6"/><rect x="275" y="453.3" width="1" height="58.7"/><rect x="276" y="451.3" width="1" height="60.6"/><rect x="277" y="450.1" width="1" height="61.7"/><rect x="278" y="449.1" width="1" height="63"/><rect x="279" y="449.5" width="1" height="62.6"/><rect x="280" y="449.6" width="1" height="62.1"/><rect x="281" y="450.4" width="1" height="61.2"/><rect x="282" y="450.5" width="1" height="61.4"/><rect x="283" y="451.3" width="1" height="59.9"/><rect x="284" y="444.3" width="1" height="63.8"/><rect x="285" y="433.6" width="1" height="68.4"/><rect x="286" y="426.2" width="1" height="69"/><rect x="287" y="414.4" width="1" height="73.8"/><rect x="288" y="407.7" width="1" height="73.2"/><rect x="289" y="402.7" width="1" height="71.3"/><rect x="290" y="400.3" width="1" height="66.3"/><rect x="291" y="390.2" width="1" height="69.9"/><rect x="292" y="385" width="1" height="74"/><rect x="293" y="395.4" width="1" height="68.8"/><rect x="294" y="400.3" width="1" height="70.5"/><rect x="295" y="403.6" width="1" height="74.3"/><rect x="296" y="411.5" width="1" height="73.5"/><rect x="297" y="422.9" width="1" height="69.4"/><rect x="298" y="430.5" width="1" height="68.6"/><rect x="299" y="439.5" width="1" height="65.9"/><rect x="300" y="448.7" width="1" height="61.7"/><rect x="301" y="451.3" width="1" height="60.1"/><rect x="302" y="452.4" width="1" height="59.1"/><rect x="303" y="450.6" width="1" height="61"/><rect x="304" y="450.5" width="1" height="61.2"/><rect x="305" y="452.8" width="1" height="59.2"/><rect x="306" y="453.2" width="1" height="58.5"/><rect x="307" y="449.6" width="1" height="62.3"/><rect x="308" y="452.4" width="1" height="59.4"/><rect x="309" y="451.9" width="1" height="59.7"/><rect x="310" y="451" width="1" height="61.1"/><rect x="311" y="452.5" width="1" height="59.5"/><rect x="312" y="453.8" width="1" height="57.9"/><rect x="313" y="450.1" width="1" height="61.6"/><rect x="314" y="450.9" width="1" height="61.1"/><rect x="315" y="452.8" width="1" height="59.2"/><rect x="316" y="452.2" width="1" height="59.8"/><rect x="317" y="451" width="1" height="60.9"/><rect x="318" y="448.8" width="1" height="63.2"/><rect x="319" y="449.1" width="1" height="62.9"/><rect x="320" y="451.2" width="1" height="60.5"/><rect x="321" y="449" width="1" height="62.5"/><rect x="322" y="451" width="1" height="60.5"/><rect x="323" y="449.8" width="1" height="61.4"/><rect x="324" y="450.5" width="1" height="60.2"/><rect x="325" y="446" width="1" height="61.3"/><rect x="326" y="439.9" width="1" height="61.8"/><rect x="327" y="434" width="1" height="61.1"/><rect x="328" y="424.7" width="1" height="64"/><rect x="329" y="417.9" width="1" height="63.5"/><rect x="330" y="412.6" width="1" height="62.3"/><rect x="331" y="408.2" width="1" height="60.3"/><rect x="332" y="398.6" width="1" height="63.6"/><rect x="333" y="398.1" width="1" height="62.9"/><rect x="334" y="407.6" width="1" height="59.2"/><rect x="335" y="413" width="1" height="60.5"/><rect x="336" y="416.5" width="1" height="63.7"/><rect x="337" y="423.1" width="1" height="64.2"/><rect x="338" y="430" width="1" height="63.7"/><rect x="339" y="439.4" width="1" height="61"/><rect x="340" y="444.3" width="1" height="61.9"/><rect x="341" y="447.7" width="1" height="62.6"/><rect x="342" y="450.5" width="1" height="60.8"/><rect x="343" y="452.5" width="1" height="59.2"/><rect x="344" y="452.2" width="1" height="59.6"/><rect x="345" y="453.1" width="1" height="58.4"/><rect x="346" y="450.2" width="1" height="61.6"/><rect x="347" y="451.8" width="1" height="59.6"/><rect x="348" y="451.8" width="1" height="59.8"/><rect x="349" y="450.5" width="1" height="61"/><rect x="350" y="449" width="1" height="62.3"/><rect x="351" y="449.1" width="1" height="62.4"/><rect x="352" y="452.1" width="1" height="59.3"/><rect x="353" y="453.6" width="1" height="57.9"/><rect x="354" y="451" width="1" height="60.8"/><rect x="355" y="452.3" width="1" height="59.3"/><rect x="356" y="449.2" width="1" height="62.4"/><rect x="357" y="449.6" width="1" height="62.2"/><rect x="358" y="449.3" width="1" height="62.2"/><rect x="359" y="451.7" width="1" height="59.5"/><rect x="360" y="450.8" width="1" height="60.6"/><rect x="361" y="452.4" width="1" height="58.5"/><rect x="362" y="450.2" width="1" height="60.5"/><rect x="363" y="439.2" width="1" height="70.3"/><rect x="364" y="426.3" width="1" height="76.7"/><rect x="365" y="409.8" width="1" height="85.8"/><rect x="366" y="396.1" width="1" height="91.9"/><rect x="367" y="394.5" width="1" height="86.1"/><rect x="368" y="393.4" width="1" height="79"/><rect x="369" y="390.1" width="1" height="74.8"/><rect x="370" y="388.1" width="1" height="68.9"/><rect x="371" y="379.2" width="1" height="71.2"/><rect x="372" y="371.9" width="1" height="77.3"/><rect x="373" y="375" width="1" height="74.4"/><rect x="374" y="382.3" width="1" height="70.5"/><rect x="375" y="387.6" width="1" height="72.2"/><rect x="376" y="389.9" width="1" height="77.7"/><rect x="377" y="392.7" width="1" height="82.9"/><rect x="378" y="395.6" width="1" height="88"/><rect x="379" y="399.6" width="1" height="91.4"/><rect x="380" y="416.6" width="1" height="82"/><rect x="381" y="431.5" width="1" height="74.3"/><rect x="382" y="448.1" width="1" height="62.3"/><rect x="383" y="451.9" width="1" height="58.9"/><rect x="384" y="452.6" width="1" height="58.4"/><rect x="385" y="451.5" width="1" height="59.6"/><rect x="386" y="452" width="1" height="59.2"/><rect x="387" y="450.2" width="1" height="61.1"/><rect x="388" y="448.7" width="1" height="62.8"/><rect x="389" y="450.2" width="1" height="61.2"/><rect x="390" y="449.9" width="1" height="61.8"/><rect x="391" y="450.4" width="1" height="60.9"/><rect x="392" y="451.8" width="1" height="59.6"/><rect x="393" y="453.2" width="1" height="58"/><rect x="394" y="451.6" width="1" height="60"/><rect x="395" y="452.6" width="1" height="59.1"/><rect x="396" y="449.4" width="1" height="61.8"/><rect x="397" y="448.2" width="1" height="63"/><rect x="398" y="451.9" width="1" height="59.3"/><rect x="399" y="453.1" width="1" height="57.9"/><rect x="400" y="453.6" width="1" height="57.2"/><rect x="401" y="454.6" width="1" height="55.6"/><rect x="402" y="438.3" width="1" height="66.3"/><rect x="403" y="417" width="1" height="78.8"/><rect x="404" y="400" width="1" height="86.7"/><rect x="405" y="390.3" width="1" height="86.8"/><rect x="406" y="389.9" width="1" height="77.8"/><rect x="407" y="386.2" width="1" height="72.2"/><rect x="408" y="382.5" width="1" height="66.2"/><rect x="409" y="372.2" width="1" height="68.8"/><rect x="410" y="357.7" width="1" height="82.4"/><rect x="411" y="374.7" width="1" height="67.5"/><rect x="412" y="384.5" width="1" height="66.2"/><rect x="413" y="387.4" width="1" height="73"/><rect x="414" y="389.2" width="1" height="80.3"/><rect x="415" y="391" width="1" height="87.9"/><rect x="416" y="403.6" width="1" height="85.1"/><rect x="417" y="422.6" width="1" height="75.1"/><rect x="418" y="439" width="1" height="67"/><rect x="419" y="455" width="1" height="55.4"/><rect x="420" y="449.1" width="1" height="61.9"/><rect x="421" y="449.1" width="1" height="61.8"/><rect x="422" y="448.6" width="1" height="62.4"/><rect x="423" y="449.9" width="1" height="61.5"/><rect x="424" y="448.3" width="1" height="63"/><rect x="425" y="451.1" width="1" height="60.4"/><rect x="426" y="449.1" width="1" height="62"/><rect x="427" y="452" width="1" height="59.5"/><rect x="428" y="451" width="1" height="60.1"/><rect x="429" y="452.6" width="1" height="58.6"/><rect x="430" y="452.9" width="1" height="58.3"/><rect x="431" y="452.8" width="1" height="58.2"/><rect x="432" y="452.7" width="1" height="58.4"/><rect x="433" y="450.5" width="1" height="60.8"/><rect x="434" y="452.1" width="1" height="59"/><rect x="435" y="449.5" width="1" height="61.6"/><rect x="436" y="450.1" width="1" height="61"/><rect x="437" y="448.7" width="1" height="62.4"/><rect x="438" y="450.7" width="1" height="60.7"/><rect x="439" y="448.8" width="1" height="62.4"/><rect x="440" y="450.9" width="1" height="59.9"/><rect x="441" y="443.5" width="1" height="67.4"/><rect x="442" y="430.8" width="1" height="79.8"/><rect x="443" y="426.5" width="1" height="82.9"/><rect x="444" y="421.3" width="1" height="80.5"/><rect x="445" y="410" width="1" height="81.5"/><rect x="446" y="400" width="1" height="80.8"/><rect x="447" y="389.3" width="1" height="80.2"/><rect x="448" y="383" width="1" height="75.4"/><rect x="449" y="378.6" width="1" height="69.5"/><rect x="450" y="366.7" width="1" height="77.9"/><rect x="451" y="383.1" width="1" height="70.9"/><rect x="452" y="387.8" width="1" height="77.2"/><rect x="453" y="394.1" width="1" height="82.2"/><rect x="454" y="406" width="1" height="81.3"/><rect x="455" y="418.2" width="1" height="79.6"/><rect x="456" y="427.6" width="1" height="79.4"/><rect x="457" y="428.6" width="1" height="81.3"/><rect x="458" y="440.1" width="1" height="70.4"/><rect x="459" y="452.2" width="1" height="58.5"/><rect x="460" y="452.6" width="1" height="58.2"/><rect x="461" y="451" width="1" height="60.2"/><rect x="462" y="449.3" width="1" height="61.7"/><rect x="463" y="449.8" width="1" height="61.2"/><rect x="464" y="448.2" width="1" height="62.7"/><rect x="465" y="448.1" width="1" height="63.2"/><rect x="466" y="450.1" width="1" height="61.2"/><rect x="467" y="448.8" width="1" height="62.5"/><rect x="468" y="448" width="1" height="63.1"/><rect x="469" y="449.9" width="1" height="61.1"/><rect x="470" y="452" width="1" height="59.1"/><rect x="471" y="451.2" width="1" height="60.1"/><rect x="472" y="448.9" width="1" height="62.5"/><rect x="473" y="450.5" width="1" height="60.5"/><rect x="474" y="451.5" width="1" height="59.4"/><rect x="475" y="453" width="1" height="58.1"/><rect x="476" y="450.6" width="1" height="60.5"/><rect x="477" y="450.3" width="1" height="60.4"/><rect x="478" y="451.2" width="1" height="59.4"/><rect x="479" y="452.2" width="1" height="58.5"/><rect x="480" y="451.4" width="1" height="59.5"/><rect x="481" y="452.4" width="1" height="58.2"/><rect x="482" y="437.4" width="1" height="71.8"/><rect x="483" y="427.2" width="1" height="76.2"/><rect x="484" y="409.7" width="1" height="85.5"/><rect x="485" y="394.2" width="1" height="92.6"/><rect x="486" y="385.7" width="1" height="92.8"/><rect x="487" y="383.4" width="1" height="86.7"/><rect x="488" y="381.4" width="1" height="80.2"/><rect x="489" y="374.4" width="1" height="79.3"/><rect x="490" y="357.7" width="1" height="91.5"/><rect x="491" y="366.7" width="1" height="83.2"/><rect x="492" y="379" width="1" height="77.2"/><rect x="493" y="383.4" width="1" height="81.4"/><rect x="494" y="384.9" width="1" height="88.8"/><rect x="495" y="386.9" width="1" height="95.4"/><rect x="496" y="399.2" width="1" height="91.3"/><rect x="497" y="413.9" width="1" height="85"/><rect x="498" y="431" width="1" height="75.5"/><rect x="499" y="444.5" width="1" height="65.5"/><rect x="500" y="449.4" width="1" height="61.1"/><rect x="501" y="451.1" width="1" height="59.3"/><rect x="502" y="449.8" width="1" height="60.7"/><rect x="503" y="447.9" width="1" height="62.9"/><rect x="504" y="450.5" width="1" height="60.2"/><rect x="505" y="448.1" width="1" height="62.5"/><rect x="506" y="450.7" width="1" height="59.7"/><rect x="507" y="451.5" width="1" height="58.7"/><rect x="508" y="449.4" width="1" height="60.6"/><rect x="509" y="448.6" width="1" height="61.3"/><rect x="510" y="448.9" width="1" height="61.3"/><rect x="511" y="450.7" width="1" height="59.5"/><rect x="512" y="451.4" width="1" height="58.4"/><rect x="513" y="450.6" width="1" height="59.2"/><rect x="514" y="451.5" width="1" height="58.3"/><rect x="515" y="449.7" width="1" height="60"/><rect x="516" y="452.3" width="1" height="57.1"/><rect x="517" y="452.4" width="1" height="56.8"/><rect x="518" y="449.9" width="1" height="59.3"/><rect x="519" y="451" width="1" height="58.5"/><rect x="520" y="451.7" width="1" height="57.4"/><rect x="521" y="452.2" width="1" height="56.9"/><rect x="522" y="449.5" width="1" height="59.8"/><rect x="523" y="450.4" width="1" height="58.6"/><rect x="524" y="450.9" width="1" height="58.1"/><rect x="525" y="450.4" width="1" height="58.5"/><rect x="526" y="451.3" width="1" height="57.4"/><rect x="527" y="450.8" width="1" height="57.5"/><rect x="528" y="439.5" width="1" height="68.1"/><rect x="529" y="421.8" width="1" height="83.8"/><rect x="530" y="408.5" width="1" height="89.6"/><rect x="531" y="394.1" width="1" height="95.9"/><rect x="532" y="386.9" width="1" height="95.1"/><rect x="533" y="387.3" width="1" height="86.2"/><rect x="534" y="385" width="1" height="79.8"/><rect x="535" y="384" width="1" height="72.6"/><rect x="536" y="382.3" width="1" height="65.7"/><rect x="537" y="371.8" width="1" height="68.2"/><rect x="538" y="359" width="1" height="78.8"/><rect x="539" y="358.7" width="1" height="78.9"/><rect x="540" y="369.3" width="1" height="69"/><rect x="541" y="381.4" width="1" height="64.4"/><rect x="542" y="382.1" width="1" height="72.1"/><rect x="543" y="383.6" width="1" height="79.6"/><rect x="544" y="385.7" width="1" height="86.2"/><rect x="545" y="389.3" width="1" height="90.9"/><rect x="546" y="392" width="1" height="96.4"/><rect x="547" y="406.1" width="1" height="90.6"/><rect x="548" y="418.9" width="1" height="85.1"/><rect x="549" y="436.7" width="1" height="70.3"/><rect x="550" y="447.7" width="1" height="59.9"/><rect x="551" y="450.1" width="1" height="57.9"/><rect x="552" y="447.4" width="1" height="60.6"/><rect x="553" y="448.8" width="1" height="59.4"/><rect x="554" y="447.9" width="1" height="60.3"/><rect x="555" y="448.4" width="1" height="59.9"/><rect x="556" y="448.2" width="1" height="60.1"/><rect x="557" y="448.1" width="1" height="59.8"/><rect x="558" y="450" width="1" height="58.1"/><rect x="559" y="447.9" width="1" height="60.3"/><rect x="560" y="446.9" width="1" height="61.3"/><rect x="561" y="449.7" width="1" height="58.5"/><rect x="562" y="450.3" width="1" height="57.7"/><rect x="563" y="449.4" width="1" height="58.5"/><rect x="564" y="451.4" width="1" height="56.3"/><rect x="565" y="451.8" width="1" height="55.7"/><rect x="566" y="448.8" width="1" height="58.7"/><rect x="567" y="452" width="1" height="55.4"/><rect x="568" y="451.3" width="1" height="55"/><rect x="569" y="431.9" width="1" height="68.5"/><rect x="570" y="412.2" width="1" height="80.4"/><rect x="571" y="396" width="1" height="89.1"/><rect x="572" y="394.4" width="1" height="82.4"/><rect x="573" y="392.8" width="1" height="76.3"/><rect x="574" y="390.1" width="1" height="71.2"/><rect x="575" y="385.8" width="1" height="67.4"/><rect x="576" y="375.9" width="1" height="71.9"/><rect x="577" y="366.2" width="1" height="81.1"/><rect x="578" y="378.1" width="1" height="71.1"/><rect x="579" y="390.7" width="1" height="65.6"/><rect x="580" y="392.4" width="1" height="71.6"/><rect x="581" y="394.3" width="1" height="78"/><rect x="582" y="394.1" width="1" height="85.9"/><rect x="583" y="400.6" width="1" height="87.1"/><rect x="584" y="417.7" width="1" height="77.9"/><rect x="585" y="438.6" width="1" height="64"/><rect x="586" y="454.3" width="1" height="52.4"/><rect x="587" y="448.6" width="1" height="58.8"/><rect x="588" y="448.3" width="1" height="59.3"/><rect x="589" y="450.7" width="1" height="56.9"/><rect x="590" y="449.9" width="1" height="57.9"/><rect x="591" y="449" width="1" height="58.5"/><rect x="592" y="450.2" width="1" height="57.7"/><rect x="593" y="450.6" width="1" height="57.2"/><rect x="594" y="451.3" width="1" height="56.5"/><rect x="595" y="450.4" width="1" height="57.3"/><rect x="596" y="448.6" width="1" height="59.1"/><rect x="597" y="446.9" width="1" height="60.7"/><rect x="598" y="449.6" width="1" height="58.1"/><rect x="599" y="449.9" width="1" height="57.6"/><rect x="600" y="448.8" width="1" height="58.7"/><rect x="601" y="449.5" width="1" height="58"/><rect x="602" y="449.8" width="1" height="57.8"/><rect x="603" y="448.1" width="1" height="59.3"/><rect x="604" y="449.9" width="1" height="57.4"/><rect x="605" y="450.1" width="1" height="57.1"/><rect x="606" y="432.7" width="1" height="73.3"/><rect x="607" y="410.2" width="1" height="93.3"/><rect x="608" y="392.4" width="1" height="107.4"/><rect x="609" y="390.2" width="1" height="105.6"/><rect x="610" y="390.8" width="1" height="100.3"/><rect x="611" y="390.3" width="1" height="96"/><rect x="612" y="392.5" width="1" height="88.4"/><rect x="613" y="390.2" width="1" height="85.3"/><rect x="614" y="386.2" width="1" height="83.7"/><rect x="615" y="372.9" width="1" height="91.8"/><rect x="616" y="350" width="1" height="111.1"/><rect x="617" y="379.1" width="1" height="86.6"/><rect x="618" y="390.6" width="1" height="80.7"/><rect x="619" y="389.5" width="1" height="87.4"/><rect x="620" y="391.6" width="1" height="90.5"/><rect x="621" y="390.1" width="1" height="97.3"/><rect x="622" y="390.4" width="1" height="101.7"/><rect x="623" y="389.5" width="1" height="106.8"/><rect x="624" y="393.2" width="1" height="107.4"/><rect x="625" y="413.8" width="1" height="90"/><rect x="626" y="436.4" width="1" height="69.8"/><rect x="627" y="447.3" width="1" height="59.2"/><rect x="628" y="449.2" width="1" height="57.6"/><rect x="629" y="447.6" width="1" height="59.2"/><rect x="630" y="448.2" width="1" height="58.8"/><rect x="631" y="449.1" width="1" height="58.1"/><rect x="632" y="448.5" width="1" height="58.7"/><rect x="633" y="452" width="1" height="54.5"/><rect x="634" y="454.3" width="1" height="50.5"/><rect x="635" y="454.5" width="1" height="47.4"/><rect x="636" y="454.3" width="1" height="45.2"/><rect x="637" y="440" width="1" height="57"/><rect x="638" y="424.2" width="1" height="69.8"/><rect x="639" y="419" width="1" height="72.6"/><rect x="640" y="414.4" width="1" height="74.6"/><rect x="641" y="413.1" width="1" height="73.2"/><rect x="642" y="413.3" width="1" height="70.6"/><rect x="643" y="415.9" width="1" height="68.4"/><rect x="644" y="421.8" width="1" height="64.8"/><rect x="645" y="424.5" width="1" height="64.9"/><rect x="646" y="427.1" width="1" height="64.6"/><rect x="647" y="432" width="1" height="62.3"/><rect x="648" y="434.1" width="1" height="63.1"/><rect x="649" y="438.4" width="1" height="61.6"/><rect x="650" y="442.6" width="1" height="59.9"/><rect x="651" y="444.1" width="1" height="60.9"/><rect x="652" y="443.2" width="1" height="63.7"/><rect x="653" y="445" width="1" height="61.9"/><rect x="654" y="445.2" width="1" height="61.8"/><rect x="655" y="449" width="1" height="57.9"/><rect x="656" y="450.9" width="1" height="56.1"/><rect x="657" y="448.9" width="1" height="58.3"/><rect x="658" y="446.5" width="1" height="60.6"/><rect x="659" y="448.2" width="1" height="58.7"/><rect x="660" y="449.6" width="1" height="57.2"/><rect x="661" y="448.6" width="1" height="58.3"/><rect x="662" y="449.5" width="1" height="57.2"/><rect x="663" y="448.3" width="1" height="58.4"/><rect x="664" y="448.2" width="1" height="58.6"/><rect x="665" y="447.6" width="1" height="59.1"/><rect x="666" y="446.7" width="1" height="59.5"/><rect x="667" y="428" width="1" height="77.7"/><rect x="668" y="417.4" width="1" height="86.7"/><rect x="669" y="418.6" width="1" height="83.4"/><rect x="670" y="417.5" width="1" height="81.3"/><rect x="671" y="419.7" width="1" height="74.7"/><rect x="672" y="416.3" width="1" height="73"/><rect x="673" y="410.7" width="1" height="72.6"/><rect x="674" y="399.6" width="1" height="76.6"/><rect x="675" y="379.9" width="1" height="91.3"/><rect x="676" y="402.3" width="1" height="75"/><rect x="677" y="406.4" width="1" height="78.2"/><rect x="678" y="407.8" width="1" height="82.4"/><rect x="679" y="413.2" width="1" height="82.3"/><rect x="680" y="411.3" width="1" height="88.2"/><rect x="681" y="408.7" width="1" height="93.5"/><rect x="682" y="414.9" width="1" height="89.3"/><rect x="683" y="425.2" width="1" height="80.1"/><rect x="684" y="439.1" width="1" height="66.8"/><rect x="685" y="449.6" width="1" height="56.7"/><rect x="686" y="450.1" width="1" height="56.2"/><rect x="687" y="446.5" width="1" height="60"/><rect x="688" y="447.5" width="1" height="59.2"/><rect x="689" y="450.1" width="1" height="56.4"/><rect x="690" y="448.1" width="1" height="58.2"/><rect x="691" y="448.3" width="1" height="57.9"/><rect x="692" y="446.3" width="1" height="59.9"/><rect x="693" y="444.9" width="1" height="61.5"/><rect x="694" y="445.7" width="1" height="60.7"/><rect x="695" y="443.3" width="1" height="62.1"/><rect x="696" y="425.5" width="1" height="78.3"/><rect x="697" y="408.3" width="1" height="93.3"/><rect x="698" y="398.7" width="1" height="100.6"/><rect x="699" y="388.3" width="1" height="107.8"/><rect x="700" y="388" width="1" height="104.7"/><rect x="701" y="391" width="1" height="97.7"/><rect x="702" y="387.6" width="1" height="96.8"/><rect x="703" y="381.4" width="1" height="98.2"/><rect x="704" y="363.8" width="1" height="112.3"/><rect x="705" y="378.7" width="1" height="100.1"/><rect x="706" y="387.6" width="1" height="95.7"/><rect x="707" y="389.9" width="1" height="97.6"/><rect x="708" y="389.2" width="1" height="102.3"/><rect x="709" y="390" width="1" height="105.4"/><rect x="710" y="396.4" width="1" height="101.9"/><rect x="711" y="409.6" width="1" height="91.7"/><rect x="712" y="420.5" width="1" height="83.1"/><rect x="713" y="438.7" width="1" height="66.5"/><rect x="714" y="447.9" width="1" height="58"/><rect x="715" y="449.1" width="1" height="56.9"/><rect x="716" y="448.8" width="1" height="57.4"/><rect x="717" y="449.6" width="1" height="56.8"/><rect x="718" y="446.9" width="1" height="59.1"/><rect x="719" y="446.2" width="1" height="60"/><rect x="720" y="447.1" width="1" height="59.3"/><rect x="721" y="448.7" width="1" height="57.3"/><rect x="722" y="449.3" width="1" height="57.1"/><rect x="723" y="449.4" width="1" height="56.9"/><rect x="724" y="446.8" width="1" height="59.6"/><rect x="725" y="448.9" width="1" height="57.3"/><rect x="726" y="451.7" width="1" height="54"/><rect x="727" y="446.8" width="1" height="56.6"/><rect x="728" y="434.4" width="1" height="66.1"/><rect x="729" y="423.7" width="1" height="73.6"/><rect x="730" y="417.5" width="1" height="76.4"/><rect x="731" y="419" width="1" height="71.8"/><rect x="732" y="418.6" width="1" height="69.4"/><rect x="733" y="414.4" width="1" height="70.6"/><rect x="734" y="409.4" width="1" height="74.1"/><rect x="735" y="410.4" width="1" height="73.2"/><rect x="736" y="417.7" width="1" height="68.6"/><rect x="737" y="418.1" width="1" height="71.5"/><rect x="738" y="416.7" width="1" height="76.3"/><rect x="739" y="417.9" width="1" height="78.1"/><rect x="740" y="426.7" width="1" height="72.2"/><rect x="741" y="441.2" width="1" height="60.5"/><rect x="742" y="448.1" width="1" height="56.7"/><rect x="743" y="448.3" width="1" height="57.4"/><rect x="744" y="447.3" width="1" height="58.4"/><rect x="745" y="448.4" width="1" height="57.5"/><rect x="746" y="449.4" width="1" height="56.8"/><rect x="747" y="449.2" width="1" height="57"/><rect x="748" y="446.6" width="1" height="59.1"/><rect x="749" y="445" width="1" height="60.8"/><rect x="750" y="444.4" width="1" height="61.3"/><rect x="751" y="446.3" width="1" height="59.9"/><rect x="752" y="446.4" width="1" height="59.8"/><rect x="753" y="448.4" width="1" height="57.3"/><rect x="754" y="447.8" width="1" height="58.1"/><rect x="755" y="445.1" width="1" height="61.1"/><rect x="756" y="444.8" width="1" height="61.3"/><rect x="757" y="446.6" width="1" height="59.6"/><rect x="758" y="447.5" width="1" height="58.3"/><rect x="759" y="446.5" width="1" height="59.2"/><rect x="760" y="448.7" width="1" height="57.3"/><rect x="761" y="446.3" width="1" height="59.2"/><rect x="762" y="444.8" width="1" height="60.6"/><rect x="763" y="447.6" width="1" height="57.8"/><rect x="764" y="429.6" width="1" height="75.5"/><rect x="765" y="422.2" width="1" height="81.8"/><rect x="766" y="415.4" width="1" height="82.1"/><rect x="767" y="404.8" width="1" height="82.9"/><rect x="768" y="397" width="1" height="80.5"/><rect x="769" y="393" width="1" height="74.3"/><rect x="770" y="388.4" width="1" height="68.7"/><rect x="771" y="377" width="1" height="70.5"/><rect x="772" y="343.2" width="1" height="100.4"/><rect x="773" y="374.7" width="1" height="72.9"/><rect x="774" y="390.8" width="1" height="65.8"/><rect x="775" y="392.4" width="1" height="74.5"/><rect x="776" y="396.3" width="1" height="80.2"/><rect x="777" y="404.9" width="1" height="81.4"/><rect x="778" y="414.6" width="1" height="80.8"/><rect x="779" y="420.5" width="1" height="81.1"/><rect x="780" y="430.9" width="1" height="71.5"/><rect x="781" y="442.9" width="1" height="59.4"/><rect x="782" y="442.4" width="1" height="60.2"/><rect x="783" y="442.8" width="1" height="59.4"/><rect x="784" y="443.3" width="1" height="58.8"/><rect x="785" y="445.4" width="1" height="56.5"/><rect x="786" y="446.1" width="1" height="55.7"/><rect x="787" y="446" width="1" height="55.9"/><rect x="788" y="443.1" width="1" height="58.5"/><rect x="789" y="442.1" width="1" height="59.3"/><rect x="790" y="441.2" width="1" height="60.1"/><rect x="791" y="444.5" width="1" height="57.1"/><rect x="792" y="445.4" width="1" height="55.9"/><rect x="793" y="443" width="1" height="58.6"/><rect x="794" y="440.8" width="1" height="60.8"/><rect x="795" y="441.3" width="1" height="60.4"/><rect x="796" y="441.2" width="1" height="60.1"/><rect x="797" y="441.8" width="1" height="58.5"/><rect x="798" y="440" width="1" height="58.9"/><rect x="799" y="438.7" width="1" height="58.8"/><rect x="800" y="432.4" width="1" height="63.8"/><rect x="801" y="434.4" width="1" height="61.5"/><rect x="802" y="434.8" width="1" height="62.6"/><rect x="803" y="438.5" width="1" height="60.2"/><rect x="804" y="443.2" width="1" height="57.1"/><rect x="805" y="444.1" width="1" height="56.9"/><rect x="806" y="441.2" width="1" height="60.1"/><rect x="807" y="441.6" width="1" height="59.7"/><rect x="808" y="440.4" width="1" height="60.9"/><rect x="809" y="441.4" width="1" height="59.8"/><rect x="810" y="444.1" width="1" height="56.8"/><rect x="811" y="442" width="1" height="58.8"/><rect x="812" y="436.1" width="1" height="63.5"/><rect x="813" y="423.8" width="1" height="70.3"/><rect x="814" y="407.8" width="1" height="79.2"/><rect x="815" y="394.8" width="1" height="84.6"/><rect x="816" y="384.4" width="1" height="87.4"/><rect x="817" y="385" width="1" height="78.9"/><rect x="818" y="381.7" width="1" height="74.6"/><rect x="819" y="381.5" width="1" height="67.2"/><rect x="820" y="369.8" width="1" height="71.9"/><rect x="821" y="355.9" width="1" height="84.3"/><rect x="822" y="365.3" width="1" height="75.3"/><rect x="823" y="380.3" width="1" height="66.3"/><rect x="824" y="382.3" width="1" height="72"/><rect x="825" y="383.7" width="1" height="78.5"/><rect x="826" y="385.7" width="1" height="84.1"/><rect x="827" y="393.1" width="1" height="84.3"/><rect x="828" y="405.2" width="1" height="80.1"/><rect x="829" y="419.5" width="1" height="73.2"/><rect x="830" y="431.9" width="1" height="67.2"/><rect x="831" y="441.4" width="1" height="59"/><rect x="832" y="443.3" width="1" height="57.2"/><rect x="833" y="444.4" width="1" height="56.5"/><rect x="834" y="442.6" width="1" height="58.2"/><rect x="835" y="444.3" width="1" height="56.5"/><rect x="836" y="442.6" width="1" height="58.4"/><rect x="837" y="444" width="1" height="56.8"/><rect x="838" y="442" width="1" height="58.8"/><rect x="839" y="442.2" width="1" height="58.9"/><rect x="840" y="443.7" width="1" height="57.4"/><rect x="841" y="444.5" width="1" height="56.5"/><rect x="842" y="441" width="1" height="59.8"/><rect x="843" y="444.1" width="1" height="56.9"/><rect x="844" y="442.2" width="1" height="58.6"/><rect x="845" y="443" width="1" height="57.6"/><rect x="846" y="442.7" width="1" height="57.8"/><rect x="847" y="442.2" width="1" height="58.5"/><rect x="848" y="440.3" width="1" height="60.3"/><rect x="849" y="444" width="1" height="56.9"/><rect x="850" y="444.9" width="1" height="56"/><rect x="851" y="445" width="1" height="55.9"/><rect x="852" y="445.1" width="1" height="55.4"/><rect x="853" y="435.5" width="1" height="65.2"/><rect x="854" y="424.1" width="1" height="76.7"/><rect x="855" y="414.4" width="1" height="85.8"/><rect x="856" y="412.6" width="1" height="85.2"/><rect x="857" y="405.7" width="1" height="87.7"/><rect x="858" y="399.8" width="1" height="89"/><rect x="859" y="392.2" width="1" height="91.7"/><rect x="860" y="383.1" width="1" height="96"/><rect x="861" y="376.3" width="1" height="100.8"/><rect x="862" y="387.4" width="1" height="93.8"/><rect x="863" y="395.6" width="1" height="90.6"/><rect x="864" y="400.5" width="1" height="90.7"/><rect x="865" y="408.4" width="1" height="87.5"/><rect x="866" y="411.6" width="1" height="88.2"/><rect x="867" y="418.3" width="1" height="82.6"/><rect x="868" y="427.5" width="1" height="73.7"/><rect x="869" y="441.8" width="1" height="59.6"/><rect x="870" y="444.1" width="1" height="57.2"/><rect x="871" y="446.2" width="1" height="55.2"/><rect x="872" y="446.3" width="1" height="55.2"/><rect x="873" y="442.8" width="1" height="59.1"/><rect x="874" y="443.4" width="1" height="58.2"/><rect x="875" y="443.5" width="1" height="58.2"/><rect x="876" y="445.4" width="1" height="56.3"/><rect x="877" y="443.5" width="1" height="58.6"/><rect x="878" y="445.6" width="1" height="56.2"/><rect x="879" y="444.3" width="1" height="57.6"/><rect x="880" y="446.3" width="1" height="55.6"/><rect x="881" y="434.2" width="1" height="66.7"/><rect x="882" y="407.1" width="1" height="89.7"/><rect x="883" y="407" width="1" height="84.9"/><rect x="884" y="403.4" width="1" height="83.5"/><rect x="885" y="403.4" width="1" height="78.1"/><rect x="886" y="400.5" width="1" height="75.7"/><rect x="887" y="396.9" width="1" height="74.2"/><rect x="888" y="392.7" width="1" height="72.9"/><rect x="889" y="390.9" width="1" height="69.3"/><rect x="890" y="386" width="1" height="69.1"/><rect x="891" y="378.6" width="1" height="72.4"/><rect x="892" y="375.6" width="1" height="75.3"/><rect x="893" y="380.9" width="1" height="74.6"/><rect x="894" y="381.1" width="1" height="80"/><rect x="895" y="382.6" width="1" height="83.9"/><rect x="896" y="384.8" width="1" height="86.9"/><rect x="897" y="394.3" width="1" height="82.8"/><rect x="898" y="409.8" width="1" height="73.1"/><rect x="899" y="422.5" width="1" height="65.9"/><rect x="900" y="435.5" width="1" height="58"/><rect x="901" y="448" width="1" height="50.6"/><rect x="902" y="451.5" width="1" height="51.7"/><rect x="903" y="449.1" width="1" height="55"/><rect x="904" y="446.5" width="1" height="57.9"/><rect x="905" y="447.4" width="1" height="57.2"/><rect x="906" y="448.4" width="1" height="56.8"/><rect x="907" y="450.5" width="1" height="54.7"/><rect x="908" y="449" width="1" height="56.5"/><rect x="909" y="451.2" width="1" height="54.4"/><rect x="910" y="449.8" width="1" height="56.2"/><rect x="911" y="447.7" width="1" height="58.3"/><rect x="912" y="450.7" width="1" height="55.7"/><rect x="913" y="449.8" width="1" height="56.5"/><rect x="914" y="451.7" width="1" height="55.1"/><rect x="915" y="451.4" width="1" height="55.8"/><rect x="916" y="451.9" width="1" height="55.2"/><rect x="917" y="449.2" width="1" height="57.7"/><rect x="918" y="426.7" width="1" height="79.6"/><rect x="919" y="419" width="1" height="87.2"/><rect x="920" y="436.8" width="1" height="70.3"/><rect x="921" y="448.1" width="1" height="59.8"/><rect x="922" y="450.6" width="1" height="57.6"/><rect x="923" y="451.6" width="1" height="56.6"/><rect x="924" y="450.2" width="1" height="58.6"/><rect x="925" y="450.6" width="1" height="58.4"/><rect x="926" y="449" width="1" height="60"/><rect x="927" y="450.4" width="1" height="58.6"/><rect x="928" y="451.4" width="1" height="57.9"/><rect x="929" y="457.1" width="1" height="51.7"/><rect x="930" y="449.8" width="1" height="54.8"/><rect x="931" y="421.7" width="1" height="73.8"/><rect x="932" y="407.4" width="1" height="78"/><rect x="933" y="401.5" width="1" height="73"/><rect x="934" y="405.9" width="1" height="58.4"/><rect x="935" y="397.6" width="1" height="59"/><rect x="936" y="388.4" width="1" height="67.6"/><rect x="937" y="389.7" width="1" height="66.4"/><rect x="938" y="388.6" width="1" height="67.9"/><rect x="939" y="392.5" width="1" height="64"/><rect x="940" y="390" width="1" height="66.4"/><rect x="941" y="394" width="1" height="62.7"/><rect x="942" y="400.6" width="1" height="57.2"/><rect x="943" y="409.2" width="1" height="55.3"/><rect x="944" y="409.4" width="1" height="65.9"/><rect x="945" y="416.1" width="1" height="73.2"/><rect x="946" y="429" width="1" height="74.7"/><rect x="947" y="456.7" width="1" height="60.3"/><rect x="948" y="475.6" width="1" height="50.5"/><rect x="949" y="468.6" width="1" height="59.3"/><rect x="950" y="467.5" width="1" height="61.3"/><rect x="951" y="469" width="1" height="60.6"/><rect x="952" y="468.7" width="1" height="61.6"/><rect x="953" y="472.5" width="1" height="58.7"/><rect x="954" y="471.6" width="1" height="60.3"/><rect x="955" y="471.9" width="1" height="60.8"/><rect x="956" y="470.7" width="1" height="62.6"/><rect x="957" y="472.2" width="1" height="61.4"/><rect x="958" y="475.4" width="1" height="58.6"/><rect x="959" y="474.7" width="1" height="60.1"/><rect x="960" y="474.1" width="1" height="61"/><rect x="961" y="477.3" width="1" height="58.5"/><rect x="962" y="475.4" width="1" height="60.6"/><rect x="963" y="477.8" width="1" height="58.6"/><rect x="964" y="480" width="1" height="56.8"/><rect x="965" y="480.9" width="1" height="56.5"/><rect x="966" y="478" width="1" height="59.6"/><rect x="967" y="476.9" width="1" height="61.1"/><rect x="968" y="477" width="1" height="61.4"/><rect x="969" y="478.9" width="1" height="59.5"/><rect x="970" y="478.6" width="1" height="60.2"/><rect x="971" y="478.2" width="1" height="61"/><rect x="972" y="477.7" width="1" height="61.6"/><rect x="973" y="480.1" width="1" height="59.3"/><rect x="974" y="482.3" width="1" height="57.4"/><rect x="975" y="482.6" width="1" height="57.5"/><rect x="976" y="481.2" width="1" height="59"/><rect x="977" y="480.2" width="1" height="60.2"/><rect x="978" y="483.2" width="1" height="57.5"/><rect x="979" y="483.5" width="1" height="57.4"/><rect x="980" y="483" width="1" height="58.2"/><rect x="981" y="482.4" width="1" height="58.9"/><rect x="982" y="480.2" width="1" height="61.1"/><rect x="983" y="480.4" width="1" height="60.9"/><rect x="984" y="483.1" width="1" height="58.4"/><rect x="985" y="482.4" width="1" height="59.5"/><rect x="986" y="483.9" width="1" height="58"/><rect x="987" y="484.9" width="1" height="56.6"/><rect x="988" y="482.5" width="1" height="58.9"/><rect x="989" y="483.6" width="1" height="58.2"/><rect x="990" y="482.4" width="1" height="59.4"/><rect x="991" y="483.6" width="1" height="58.4"/><rect x="992" y="481.8" width="1" height="60.3"/><rect x="993" y="482.1" width="1" height="59.9"/><rect x="994" y="481.2" width="1" height="60.6"/><rect x="995" y="484.2" width="1" height="57.8"/><rect x="996" y="484.6" width="1" height="57.2"/><rect x="997" y="481.6" width="1" height="60.2"/><rect x="998" y="481.3" width="1" height="60.7"/><rect x="999" y="482.3" width="1" height="59.6"/><rect x="1000" y="482.5" width="1" height="59.8"/><rect x="1001" y="481.5" width="1" height="60.9"/><rect x="1002" y="483.2" width="1" height="59.3"/><rect x="1003" y="482.2" width="1" height="60.1"/><rect x="1004" y="484.1" width="1" height="58.3"/><rect x="1005" y="481.4" width="1" height="61.2"/><rect x="1006" y="484.1" width="1" height="58.3"/><rect x="1007" y="481.7" width="1" height="60.9"/><rect x="1008" y="483.7" width="1" height="58.6"/><rect x="1009" y="482.5" width="1" height="59.8"/><rect x="1010" y="484.9" width="1" height="57.5"/><rect x="1011" y="486.2" width="1" height="56.6"/><rect x="1012" y="482.6" width="1" height="60.2"/><rect x="1013" y="482.9" width="1" height="60"/><rect x="1014" y="485.1" width="1" height="57.6"/><rect x="1015" y="482.7" width="1" height="60.4"/><rect x="1016" y="483" width="1" height="60.2"/></g><path d="M41,484H42V486H43V485H44V483H45V482H46V482H47V484H48V483H49V485H50V485H51V487H52V488H53V484H54V484H55V483H56V485H57V485H58V483H59V485H60V484H61V485H62V486H63V484H64V485H65V486H66V488H67V486H68V484H69V482H70V485H71V487H72V487H73V486H74V487H75V486H76V483H77V485H78V487H79V485H80V483H81V483H82V482H83V482H84V484H85V483H86V484H87V486H88V485H89V484H90V487H91V484H92V470H93V449H94V437H95V422H96V402H97V390H98V377H99V385H100V394H101V405H102V420H103V433H104V440H105V451H106V460H107V470H108V475H109V471H110V471H111V471H112V469H113V470H114V468H115V466H116V466H117V465H118V467H119V467H120V466H121V463H122V462H123V459H124V459H125V461H126V462H127V461H128V442H129V427H130V409H131V396H132V387H133V381H134V380H135V375H136V371H137V353H138V374H139V374H140V376H141V384H142V392H143V398H144V409H145V421H146V443H147V453H148V454H149V452H150V449H151V449H152V452H153V451H154V452H155V451H156V453H157V452H158V451H159V451H160V452H161V451H162V451H163V452H164V452H165V453H166V443H167V420H168V396H169V378H170V365H171V353H172V350H173V350H174V350H175V348H176V347H177V346H178V346H179V348H180V352H181V360H182V375H183V395H184V412H185V437H186V449H187V450H188V453H189V453H190V453H191V454H192V451H193V453H194V450H195V450H196V449H197V449H198V450H199V450H200V449H201V448H202V448H203V450H204V451H205V449H206V450H207V449H208V419H209V401H210V398H211V395H212V371H213V364H214V352H215V344H216V345H217V349H218V362H219V376H220V392H221V406H222V421H223V434H224V446H225V453H226V451H227V449H228V451H229V453H230V452H231V453H232V452H233V453H234V453H235V454H236V453H237V449H238V450H239V452H240V452H241V452H242V449H243V451H244V451H245V449H246V444H247V426H248V411H249V397H250V384H251V371H252V364H253V359H254V361H255V360H256V363H257V370H258V380H259V390H260V404H261V421H262V439H263V452H264V450H265V451H266V449H267V450H268V449H269V449H270V448H271V451H272V453H273V453H274V451H275V453H276V451H277V450H278V449H279V449H280V449H281V450H282V450H283V448H284V434H285V416H286V407H287V394H288V387H289V383H290V382H291V381H292V380H293V380H294V381H295V383H296V391H297V404H298V413H299V425H300V442H301V450H302V452H303V450H304V450H305V453H306V453H307V449H308V452H309V452H310V451H311V452H312V453H313V450H314V451H315V453H316V452H317V451H318V449H319V449H320V451H321V449H322V451H323V449H324V447H325V436H326V426H327V418H328V407H329V401H330V397H331V393H332V390H333V393H334V393H335V397H336V399H337V406H338V414H339V424H340V433H341V442H342V449H343V452H344V452H345V453H346V450H347V452H348V452H349V450H350V449H351V449H352V452H353V453H354V451H355V452H356V449H357V449H358V449H359V452H360V451H361V452H362V449H363V430H364V405H365V386H366V370H367V370H368V371H369V369H370V369H371V369H372V371H373V371H374V369H375V367H376V368H377V370H378V371H379V374H380V394H381V415H382V443H383V451H384V452H385V451H386V452H387V450H388V449H389V450H390V450H391V450H392V452H393V453H394V451H395V452H396V449H397V448H398V452H399V453H400V453H401V449H402V420H403V395H404V376H405V366H406V368H407V366H408V364H409V362H410V356H411V361H412V366H413V367H414V367H415V366H416V380H417V402H418V423H419V450H420V448H421V449H422V448H423V450H424V448H425V451H426V449H427V452H428V451H429V452H430V453H431V453H432V452H433V451H434V452H435V449H436V450H437V448H438V451H439V448H440V451H441V443H442V429H443V413H444V399H445V387H446V377H447V367H448V362H449V360H450V359H451V363H452V366H453V371H454V383H455V396H456V409H457V424H458V439H459V452H460V452H461V451H462V449H463V450H464V448H465V448H466V450H467V449H468V448H469V450H470V452H471V451H472V449H473V450H474V451H475V453H476V450H477V450H478V451H479V452H480V451H481V451H482V428H483V406H484V386H485V368H486V360H487V359H488V359H489V355H490V352H491V356H492V357H493V361H494V360H495V360H496V374H497V390H498V415H499V440H500V449H501V451H502V449H503V448H504V450H505V448H506V450H507V451H508V449H509V448H510V449H511V450H512V451H513V451H514V451H515V449H516V452H517V452H518V450H519V451H520V451H521V452H522V449H523V450H524V451H525V450H526V451H527V450H528V437H529V407H530V383H531V367H532V360H533V363H534V363H535V364H536V364H537V359H538V356H539V358H540V359H541V363H542V362H543V361H544V362H545V364H546V365H547V381H548V403H549V433H550V447H551V450H552V447H553V449H554V448H555V448H556V448H557V448H558V450H559V448H560V447H561V449H562V450H563V449H564V451H565V452H566V449H567V451H568V445H569V413H570V390H571V371H572V371H573V372H574V370H575V368H576V369H577V365H578V367H579V372H580V372H581V372H582V370H583V376H584V396H585V425H586V450H587V448H588V448H589V451H590V450H591V449H592V450H593V451H594V451H595V450H596V449H597V447H598V449H599V450H600V449H601V449H602V450H603V448H604V450H605V449H606V428H607V400H608V378H609V373H610V373H611V372H612V374H613V373H614V369H615V358H616V348H617V363H618V373H619V372H620V374H621V372H622V374H623V373H624V379H625V405H626V433H627V447H628V449H629V447H630V448H631V449H632V448H633V450H634V450H635V450H636V451H637V435H638V418H639V413H640V408H641V407H642V411H643V413H644V416H645V419H646V422H647V426H648V428H649V433H650V437H651V440H652V441H653V445H654V445H655V449H656V451H657V449H658V446H659V448H660V450H661V448H662V449H663V448H664V448H665V447H666V446H667V425H668V412H669V411H670V406H671V406H672V401H673V392H674V382H675V378H676V382H677V386H678V391H679V399H680V401H681V401H682V410H683V423H684V438H685V449H686V450H687V446H688V447H689V450H690V448H691V448H692V446H693V445H694V445H695V441H696V421H697V401H698V389H699V376H700V374H701V376H702V372H703V367H704V362H705V366H706V373H707V376H708V375H709V377H710V386H711V402H712V415H713V436H714V447H715V449H716V449H717V449H718V447H719V446H720V447H721V449H722V449H723V449H724V447H725V448H726V449H727V442H728V427H729V415H730V409H731V412H732V412H733V409H734V408H735V407H736V411H737V410H738V408H739V410H740V420H741V435H742V444H743V447H744V447H745V448H746V449H747V449H748V446H749V445H750V444H751V446H752V446H753V448H754V447H755V445H756V445H757V446H758V447H759V446H760V448H761V446H762V445H763V447H764V428H765V411H766V392H767V382H768V374H769V372H770V369H771V358H772V343H773V356H774V372H775V372H776V374H777V382H778V392H779V411H780V430H781V443H782V442H783V442H784V443H785V445H786V446H787V446H788V443H789V442H790V441H791V444H792V445H793V443H794V441H795V441H796V440H797V439H798V437H799V436H800V431H801V433H802V432H803V436H804V441H805V443H806V441H807V442H808V440H809V441H810V444H811V441H812V429H813V407H814V386H815V371H816V360H817V363H818V361H819V363H820V359H821V354H822V357H823V362H824V362H825V362H826V362H827V370H828V383H829V399H830V423H831V440H832V443H833V444H834V443H835V444H836V443H837V444H838V442H839V442H840V444H841V444H842V441H843V444H844V442H845V443H846V443H847V442H848V440H849V444H850V445H851V445H852V445H853V435H854V423H855V410H856V402H857V391H858V384H859V376H860V372H861V373H862V372H863V379H864V384H865V395H866V404H867V417H868V427H869V442H870V444H871V446H872V446H873V443H874V443H875V443H876V445H877V443H878V445H879V444H880V445H881V428H882V392H883V391H884V387H885V388H886V386H887V382H888V378H889V377H890V375H891V374H892V370H893V367H894V364H895V366H896V368H897V377H898V394H899V409H900V425H901V439H902V447H903V448H904V446H905V447H906V448H907V450H908V449H909V451H910V449H911V447H912V450H913V449H914V451H915V451H916V452H917V449H918V426H919V418H920V435H921V447H922V450H923V451H924V450H925V450H926V449H927V450H928V451H929V453H930V435H931V401H932V386H933V381H934V390H935V389H936V388H937V389H938V388H939V392H940V390H941V393H942V393H943V394H944V391H945V396H946V408H947V440H948V465H949V466H950V466H951V468H952V467H953V471H954V470H955V470H956V470H957V472H958V474H959V474H960V473H961V477H962V475H963V477H964V479H965V480H966V477H967V476H968V477H969V479H970V478H971V478H972V478H973V480H974V482H975V482H976V481H977V480H978V483H979V483H980V483H981V482H982V480H983V480H984V483H985V482H986V484H987V485H988V482H989V483H990V482H991V483H992V482H993V482H994V481H995V484H996V484H997V481H998V481H999V482H1000V482H1001V481H1002V483H1003V482H1004V484H1005V481H1006V484H1007V482H1008V483H1009V482H1010V485H1011V486H1012V483H1013V483H1014V485H1015V482H1016V483H1017" fill="none" stroke="#f00" stroke-width="1.7" stroke-linejoin="miter" shape-rendering="geometricPrecision"/><polyline points="41.5,543.1 42.5,543 43.5,543.2 44.5,543.3 45.5,543.2 46.5,543.1 47.5,543.4 48.5,543.2 49.5,543.5 50.5,543.2 51.5,543 52.5,543.1 53.5,543.1 54.5,543.4 55.5,543.3 56.5,543.1 57.5,543 58.5,543 59.5,543.2 60.5,543.2 61.5,543.1 62.5,543.3 63.5,543.3 64.5,543.4 65.5,543.1 66.5,543 67.5,543.3 68.5,543.2 69.5,543.3 70.5,543.2 71.5,543.1 72.5,543.2 73.5,543.2 74.5,543.4 75.5,543.3 76.5,543.3 77.5,543.4 78.5,543.1 79.5,543.2 80.5,543.1 81.5,543 82.5,543.2 83.5,543.1 84.5,543.3 85.5,543.2 86.5,543.4 87.5,543.3 88.5,543.1 89.5,543.2 90.5,542.8 91.5,542.7 92.5,542.2 93.5,537.7 94.5,527.5 95.5,515.7 96.5,504 97.5,492.1 98.5,483.4 99.5,489.8 100.5,499.8 101.5,510.1 102.5,520.4 103.5,529.5 104.5,533 105.5,533.4 106.5,532.7 107.5,532.1 108.5,531.5 109.5,531.1 110.5,530 111.5,529.3 112.5,529.1 113.5,528.4 114.5,527.8 115.5,527.5 116.5,526.9 117.5,526.2 118.5,526.1 119.5,525.6 120.5,525.2 121.5,524.8 122.5,524.3 123.5,524.2 124.5,524.1 125.5,523.8 126.5,523.7 127.5,523 128.5,522.2 129.5,520 130.5,511.3 131.5,501 132.5,490.4 133.5,479.7 134.5,468.9 135.5,458 136.5,447.4 137.5,442.3 138.5,446.3 139.5,454.9 140.5,464.5 141.5,474.1 142.5,483.7 143.5,492.9 144.5,502.2 145.5,510.4 146.5,512.3 147.5,512.2 148.5,512 149.5,512 150.5,511.8 151.5,511.6 152.5,511.8 153.5,512 154.5,511.9 155.5,512 156.5,511.7 157.5,511.8 158.5,512.1 159.5,512 160.5,512.2 161.5,512 162.5,511.9 163.5,511.8 164.5,511.7 165.5,511.6 166.5,511.2 167.5,510.3 168.5,502.9 169.5,494.1 170.5,485.5 171.5,476.3 172.5,467.1 173.5,457.7 174.5,448.8 175.5,441.7 176.5,441.4 177.5,447 178.5,455.7 179.5,464.8 180.5,474.4 181.5,483.2 182.5,492.2 183.5,501.4 184.5,509 185.5,510.9 186.5,511.4 187.5,511.3 188.5,511.7 189.5,511.5 190.5,511.5 191.5,511.7 192.5,511.8 193.5,511.7 194.5,511.8 195.5,511.5 196.5,511.5 197.5,511.7 198.5,511.9 199.5,511.8 200.5,511.7 201.5,511.6 202.5,511.8 203.5,511.6 204.5,511.9 205.5,511.8 206.5,511.5 207.5,511.3 208.5,510.8 209.5,507.9 210.5,498.8 211.5,489 212.5,478.4 213.5,468.1 214.5,457.5 215.5,447.9 216.5,445 217.5,453.6 218.5,463.6 219.5,474.3 220.5,484.5 221.5,494.9 222.5,504.3 223.5,510.2 224.5,511.3 225.5,511.4 226.5,511.8 227.5,511.7 228.5,511.4 229.5,511.8 230.5,511.7 231.5,511.4 232.5,511.6 233.5,511.8 234.5,511.7 235.5,511.7 236.5,511.4 237.5,511.3 238.5,511.4 239.5,511.6 240.5,511.6 241.5,511.6 242.5,511.7 243.5,511.5 244.5,511.5 245.5,511.4 246.5,511 247.5,510.3 248.5,504.7 249.5,496.7 250.5,487.7 251.5,479.1 252.5,470 253.5,461.4 254.5,454.3 255.5,458.2 256.5,466.4 257.5,475.2 258.5,484.5 259.5,493 260.5,501.7 261.5,509.1 262.5,510.9 263.5,511.3 264.5,511.5 265.5,511.1 266.5,511.3 267.5,511.3 268.5,511.4 269.5,511.6 270.5,511.6 271.5,511.3 272.5,511.5 273.5,511.3 274.5,511.4 275.5,511.4 276.5,511.3 277.5,511.2 278.5,511.5 279.5,511.6 280.5,511.1 281.5,511 282.5,511.2 283.5,510.6 284.5,507.5 285.5,501.4 286.5,494.5 287.5,487.6 288.5,480.3 289.5,473.4 290.5,466 291.5,459.5 292.5,458.4 293.5,463.6 294.5,470.1 295.5,477.3 296.5,484.4 297.5,491.7 298.5,498.5 299.5,504.8 300.5,509.8 301.5,510.9 302.5,510.8 303.5,510.9 304.5,511.2 305.5,511.4 306.5,511 307.5,511.3 308.5,511.2 309.5,511 310.5,511.5 311.5,511.4 312.5,511.1 313.5,511 314.5,511.3 315.5,511.4 316.5,511.4 317.5,511.3 318.5,511.4 319.5,511.4 320.5,511 321.5,510.9 322.5,511 323.5,510.6 324.5,510.1 325.5,506.7 326.5,501.2 327.5,494.5 328.5,488 329.5,480.9 330.5,474.3 331.5,467.9 332.5,461.5 333.5,460.4 334.5,466.3 335.5,472.9 336.5,479.6 337.5,486.6 338.5,493 339.5,499.8 340.5,505.6 341.5,509.7 342.5,510.6 343.5,511.1 344.5,511.2 345.5,511 346.5,511.2 347.5,510.8 348.5,510.9 349.5,510.9 350.5,510.8 351.5,510.9 352.5,510.8 353.5,510.9 354.5,511.2 355.5,511 356.5,511 357.5,511.2 358.5,510.8 359.5,510.6 360.5,510.8 361.5,510.4 362.5,510.1 363.5,509 364.5,502.5 365.5,495 366.5,487.5 367.5,480 368.5,471.8 369.5,464.4 370.5,456.3 371.5,449.8 372.5,448.5 373.5,448.8 374.5,452.2 375.5,459.3 376.5,467 377.5,475 378.5,483.1 379.5,490.4 380.5,498 381.5,505.2 382.5,509.8 383.5,510.2 384.5,510.4 385.5,510.6 386.5,510.6 387.5,510.7 388.5,511 389.5,510.8 390.5,511.1 391.5,510.7 392.5,510.9 393.5,510.7 394.5,511 395.5,511 396.5,510.7 397.5,510.5 398.5,510.6 399.5,510.4 400.5,510.3 401.5,509.6 402.5,504 403.5,495.2 404.5,486.1 405.5,476.5 406.5,467 407.5,457.8 408.5,448.1 409.5,440.4 410.5,439.6 411.5,441.6 412.5,450.1 413.5,459.7 414.5,468.9 415.5,478.3 416.5,488.1 417.5,497.1 418.5,505.4 419.5,509.8 420.5,510.3 421.5,510.4 422.5,510.4 423.5,510.8 424.5,510.7 425.5,510.9 426.5,510.5 427.5,510.8 428.5,510.4 429.5,510.6 430.5,510.7 431.5,510.5 432.5,510.5 433.5,510.8 434.5,510.5 435.5,510.5 436.5,510.5 437.5,510.5 438.5,510.8 439.5,510.6 440.5,510.2 441.5,510.3 442.5,510 443.5,508.8 444.5,501.2 445.5,490.9 446.5,480.1 447.5,468.9 448.5,457.8 449.5,447.5 450.5,444 451.5,453.3 452.5,464.4 453.5,475.7 454.5,486.7 455.5,497.2 456.5,506.3 457.5,509.4 458.5,509.9 459.5,510.1 460.5,510.2 461.5,510.6 462.5,510.4 463.5,510.3 464.5,510.3 465.5,510.7 466.5,510.7 467.5,510.7 468.5,510.5 469.5,510.4 470.5,510.5 471.5,510.7 472.5,510.7 473.5,510.4 474.5,510.3 475.5,510.5 476.5,510.5 477.5,510.2 478.5,510 479.5,510.1 480.5,510.3 481.5,510 482.5,508.7 483.5,502.8 484.5,494.7 485.5,486.2 486.5,477.8 487.5,469.5 488.5,461 489.5,453.1 490.5,448.6 491.5,449.3 492.5,455.6 493.5,464.2 494.5,473.1 495.5,481.7 496.5,489.9 497.5,498.3 498.5,505.9 499.5,509.4 500.5,509.9 501.5,509.8 502.5,509.9 503.5,510.2 504.5,510.1 505.5,510.1 506.5,509.8 507.5,509.7 508.5,509.4 509.5,509.3 510.5,509.6 511.5,509.6 512.5,509.2 513.5,509.2 514.5,509.2 515.5,509.1 516.5,508.8 517.5,508.6 518.5,508.7 519.5,508.9 520.5,508.6 521.5,508.5 522.5,508.6 523.5,508.5 524.5,508.5 525.5,508.3 526.5,508.1 527.5,507.7 528.5,507 529.5,505 530.5,497.5 531.5,489.4 532.5,481.4 533.5,473 534.5,464.3 535.5,456 536.5,447.4 537.5,439.4 538.5,437.2 539.5,437 540.5,437.8 541.5,445.2 542.5,453.7 543.5,462.6 544.5,471.3 545.5,479.6 546.5,487.8 547.5,496.1 548.5,503.4 549.5,506.4 550.5,506.9 551.5,507.5 552.5,507.4 553.5,507.6 554.5,507.5 555.5,507.7 556.5,507.7 557.5,507.4 558.5,507.5 559.5,507.6 560.5,507.7 561.5,507.6 562.5,507.4 563.5,507.3 564.5,507 565.5,506.9 566.5,506.9 567.5,506.8 568.5,505.7 569.5,499.7 570.5,492.1 571.5,484.5 572.5,476.3 573.5,468.5 574.5,460.7 575.5,452.7 576.5,447.3 577.5,446.8 578.5,448.5 579.5,455.7 580.5,463.4 581.5,471.7 582.5,479.3 583.5,487.1 584.5,494.9 585.5,502.1 586.5,506.1 587.5,506.8 588.5,507 589.5,507 590.5,507.2 591.5,507 592.5,507.3 593.5,507.3 594.5,507.2 595.5,507.1 596.5,507.1 597.5,507 598.5,507.1 599.5,506.9 600.5,506.9 601.5,506.9 602.5,507.1 603.5,506.9 604.5,506.6 605.5,506.6 606.5,505.4 607.5,502.8 608.5,499.3 609.5,495.1 610.5,490.5 611.5,485.7 612.5,480.3 613.5,474.8 614.5,469.4 615.5,464.2 616.5,460.5 617.5,465.1 618.5,470.7 619.5,476.3 620.5,481.5 621.5,486.8 622.5,491.5 623.5,495.7 624.5,500 625.5,503.2 626.5,505.6 627.5,505.9 628.5,506.2 629.5,506.3 630.5,506.4 631.5,506.5 632.5,506.6 633.5,505.9 634.5,504.1 635.5,501.3 636.5,498.9 637.5,496.4 638.5,493.4 639.5,491 640.5,488.4 641.5,485.7 642.5,483.3 643.5,483.7 644.5,486 645.5,488.8 646.5,491.1 647.5,493.7 648.5,496.6 649.5,499.4 650.5,501.9 651.5,504.5 652.5,506.3 653.5,506.4 654.5,506.4 655.5,506.3 656.5,506.4 657.5,506.6 658.5,506.5 659.5,506.3 660.5,506.2 661.5,506.3 662.5,506.1 663.5,506.1 664.5,506.2 665.5,506.1 666.5,505.6 667.5,505 668.5,503.5 669.5,501.4 670.5,498.2 671.5,493.8 672.5,488.6 673.5,482.7 674.5,475.5 675.5,470.6 676.5,476.7 677.5,484 678.5,489.7 679.5,494.9 680.5,498.9 681.5,501.6 682.5,503.7 683.5,504.7 684.5,505.3 685.5,505.7 686.5,505.8 687.5,505.8 688.5,506.1 689.5,505.9 690.5,505.7 691.5,505.7 692.5,505.6 693.5,505.8 694.5,505.8 695.5,504.8 696.5,503.2 697.5,501 698.5,498.7 699.5,495.5 700.5,492.1 701.5,488.1 702.5,483.7 703.5,479 704.5,475.5 705.5,478.2 706.5,482.8 707.5,486.9 708.5,491 709.5,494.8 710.5,497.8 711.5,500.7 712.5,503 713.5,504.6 714.5,505.3 715.5,505.4 716.5,505.6 717.5,505.7 718.5,505.4 719.5,505.6 720.5,505.8 721.5,505.5 722.5,505.8 723.5,505.7 724.5,505.8 725.5,505.6 726.5,505 727.5,502.8 728.5,499.9 729.5,496.7 730.5,493.3 731.5,490.3 732.5,487.3 733.5,484.5 734.5,482.9 735.5,483 736.5,485.7 737.5,489 738.5,492.4 739.5,495.3 740.5,498.3 741.5,501.1 742.5,504.2 743.5,505.2 744.5,505.2 745.5,505.3 746.5,505.6 747.5,505.6 748.5,505.2 749.5,505.2 750.5,505.2 751.5,505.6 752.5,505.6 753.5,505.2 754.5,505.3 755.5,505.6 756.5,505.5 757.5,505.6 758.5,505.3 759.5,505.2 760.5,505.5 761.5,504.9 762.5,504.8 763.5,504.8 764.5,504.5 765.5,503.4 766.5,496.9 767.5,487.1 768.5,476.9 769.5,466.7 770.5,456.5 771.5,446.9 772.5,443 773.5,447 774.5,455.9 775.5,466.2 776.5,476 777.5,485.7 778.5,494.8 779.5,501 780.5,501.7 781.5,501.7 782.5,502 783.5,501.6 784.5,501.5 785.5,501.3 786.5,501.1 787.5,501.3 788.5,501.1 789.5,500.8 790.5,500.8 791.5,501 792.5,500.6 793.5,501 794.5,500.9 795.5,501 796.5,500.8 797.5,499.7 798.5,498.3 799.5,496.9 800.5,495.5 801.5,495.3 802.5,496.8 803.5,498.1 804.5,499.7 805.5,500.3 806.5,500.7 807.5,500.7 808.5,500.7 809.5,500.6 810.5,500.3 811.5,500.2 812.5,499 813.5,493.5 814.5,486.4 815.5,478.8 816.5,471.2 817.5,463.3 818.5,455.7 819.5,448.1 820.5,441 821.5,439.6 822.5,439.9 823.5,446 824.5,453.7 825.5,461.7 826.5,469.2 827.5,476.9 828.5,484.7 829.5,492 830.5,498.5 831.5,499.8 832.5,499.8 833.5,500.3 834.5,500.1 835.5,500.2 836.5,500.5 837.5,500.2 838.5,500.2 839.5,500.5 840.5,500.5 841.5,500.4 842.5,500.3 843.5,500.4 844.5,500.2 845.5,500.1 846.5,499.9 847.5,500.1 848.5,500 849.5,500.3 850.5,500.2 851.5,500.3 852.5,499.9 853.5,500.1 854.5,500.2 855.5,499.6 856.5,497.2 857.5,492.7 858.5,488.2 859.5,483.3 860.5,478.5 861.5,476.5 862.5,480.6 863.5,485.6 864.5,490.6 865.5,495.3 866.5,499.2 867.5,500.3 868.5,500.5 869.5,500.8 870.5,500.7 871.5,500.8 872.5,500.9 873.5,501.3 874.5,501 875.5,501.2 876.5,501.1 877.5,501.5 878.5,501.2 879.5,501.2 880.5,501.3 881.5,500.3 882.5,496.2 883.5,491.2 884.5,486.2 885.5,480.9 886.5,475.6 887.5,470.5 888.5,465 889.5,459.6 890.5,454.5 891.5,450.5 892.5,450.3 893.5,454.9 894.5,460.5 895.5,465.9 896.5,471.1 897.5,476.5 898.5,482.3 899.5,487.8 900.5,492.9 901.5,498 902.5,502.6 903.5,503.6 904.5,503.8 905.5,504.1 906.5,504.5 907.5,504.6 908.5,504.9 909.5,505 910.5,505.4 911.5,505.4 912.5,505.8 913.5,505.7 914.5,506.2 915.5,506.6 916.5,506.5 917.5,506.3 918.5,505.7 919.5,505.6 920.5,506.5 921.5,507.3 922.5,507.5 923.5,507.6 924.5,508.2 925.5,508.4 926.5,508.4 927.5,508.4 928.5,508.6 929.5,508.2 930.5,504.1 931.5,494.8 932.5,484.8 933.5,474 934.5,463.7 935.5,455.9 936.5,455.4 937.5,455.5 938.5,455.9 939.5,455.8 940.5,455.8 941.5,456.2 942.5,457.2 943.5,463.9 944.5,474.7 945.5,488.7 946.5,503.1 947.5,516.4 948.5,525.5 949.5,527.4 950.5,528.2 951.5,529 952.5,529.7 953.5,530.6 954.5,531.3 955.5,532.1 956.5,532.8 957.5,533 958.5,533.4 959.5,534.2 960.5,534.6 961.5,535.1 962.5,535.4 963.5,535.8 964.5,536.2 965.5,536.8 966.5,537.1 967.5,537.5 968.5,537.8 969.5,537.8 970.5,538.2 971.5,538.6 972.5,538.7 973.5,538.8 974.5,539.1 975.5,539.5 976.5,539.7 977.5,539.8 978.5,540.1 979.5,540.3 980.5,540.6 981.5,540.7 982.5,540.7 983.5,540.7 984.5,540.8 985.5,541.2 986.5,541.3 987.5,540.9 988.5,540.9 989.5,541.2 990.5,541.2 991.5,541.4 992.5,541.5 993.5,541.4 994.5,541.2 995.5,541.5 996.5,541.2 997.5,541.3 998.5,541.4 999.5,541.3 1000.5,541.7 1001.5,541.9 1002.5,541.8 1003.5,541.7 1004.5,541.7 1005.5,542 1006.5,541.8 1007.5,542 1008.5,541.7 1009.5,541.7 1010.5,541.9 1011.5,542.2 1012.5,542.2 1013.5,542.3 1014.5,542.1 1015.5,542.5 1016.5,542.6" fill="none" stroke="#000" stroke-width="1.6" stroke-linejoin="round" shape-rendering="auto"/></svg>
<div style="position:absolute;left:1px;top:597px;width:1022px;height:2px;background:#c4c4c4"></div>
<div style="position:absolute;left:7px;top:604px;width:75px;height:29px;background:repeating-conic-gradient(#ff7070 0 25%,#f0a4a4 0 50%) 0 0/2px 2px;border:2px solid;border-color:#900000 #ff0000 #ff0000 #900000;box-shadow:0 0 0 1px #f8fcfc"></div><div class="t" style="left:26.88px;top:612px;transform:scaleX(1.0369);font-weight:bold;">Stop</div><div class="cb" style="left:88px;top:611px;background:#fff"><svg width="9" height="9" viewBox="0 0 9 9"><path d="M1 3.2L3.3 5.6L7.8 1.1V3.4L3.3 7.9L1 5.5Z" fill="#000"/></svg></div><div class="t" style="left:105.12px;top:610px;transform:scaleX(0.9873);"><span class="rt">Display RT frame</span></div><div class="cb" style="left:239px;top:611px;background:#fff"><svg width="9" height="9" viewBox="0 0 9 9"><path d="M1 3.2L3.3 5.6L7.8 1.1V3.4L3.3 7.9L1 5.5Z" fill="#000"/></svg></div><div class="t" style="left:256.73px;top:610px;transform:scaleX(0.9781);">Display AVG trace</div><div class="cb" style="left:396px;top:611px;background:#fff"><svg width="9" height="9" viewBox="0 0 9 9"><path d="M1 3.2L3.3 5.6L7.8 1.1V3.4L3.3 7.9L1 5.5Z" fill="#f00"/></svg></div><div class="t" style="left:412.76px;top:610px;transform:scaleX(0.9596);color:#f00">Display MAX trace</div><div class="cb" style="left:553px;top:611px;background:#f0f0f0"><svg width="9" height="9" viewBox="0 0 9 9"><path d="M1 3.2L3.3 5.6L7.8 1.1V3.4L3.3 7.9L1 5.5Z" fill="#686868"/></svg></div><div class="t" style="left:569.93px;top:610px;transform:scaleX(0.9772);color:#9a9a9a">Display MIN trace</div><div class="btn3" style="left:927px;top:604px;width:26px;height:26px"><svg style="position:absolute;left:4px;top:4px" width="16" height="16" viewBox="0 0 16 16"><rect x="2.5" y="3.5" width="11" height="8" fill="#f4f4f4" stroke="#d8d8d8"/><rect x="3" y="12" width="10" height="2" fill="#dcdcdc"/><path d="M6 1.5V10.5H13Z" fill="#ffc41a"/><path d="M8 6.2V9H10.4Z" fill="#fff3c4"/><rect x="1" y="10.6" width="14" height="1.4" fill="#8cc864"/></svg></div><div class="btn3" style="left:959px;top:604px;width:26px;height:26px"><svg style="position:absolute;left:4px;top:4px" width="16" height="16" viewBox="0 0 16 16"><circle cx="11.2" cy="8" r="2.6" fill="#1eb4dc"/><rect x="0.8" y="5.6" width="5.6" height="4.8" rx="1" fill="#e64a00" stroke="#b43200" stroke-width=".6"/><path d="M5.6 5.8L11.6 1.4V14.6L5.6 10.2Z" fill="#e64a00" stroke="#b43200" stroke-width=".6"/></svg></div><div class="btn3" style="left:991px;top:604px;width:26px;height:26px"><svg style="position:absolute;left:4px;top:4px" width="16" height="16" viewBox="0 0 16 16"><rect x="5.50" y="0.40" width="1.8" height="7.60" fill="#e6aa14" transform="rotate(0 6.4 4.2)"/><rect x="5.50" y="0.40" width="1.8" height="7.60" fill="#e6aa14" transform="rotate(45 6.4 4.2)"/><rect x="5.50" y="0.40" width="1.8" height="7.60" fill="#e6aa14" transform="rotate(90 6.4 4.2)"/><rect x="5.50" y="0.40" width="1.8" height="7.60" fill="#e6aa14" transform="rotate(135 6.4 4.2)"/><circle cx="6.4" cy="4.2" r="2.6" fill="#e6aa14"/><circle cx="6.4" cy="4.2" r="1.1" fill="#f0f0f0"/><rect x="3.30" y="6.00" width="1.8" height="6.40" fill="#145a78" transform="rotate(0 4.2 9.2)"/><rect x="3.30" y="6.00" width="1.8" height="6.40" fill="#145a78" transform="rotate(45 4.2 9.2)"/><rect x="3.30" y="6.00" width="1.8" height="6.40" fill="#145a78" transform="rotate(90 4.2 9.2)"/><rect x="3.30" y="6.00" width="1.8" height="6.40" fill="#145a78" transform="rotate(135 4.2 9.2)"/><circle cx="4.2" cy="9.2" r="2.0" fill="#145a78"/><circle cx="4.2" cy="9.2" r="0.8" fill="#f0f0f0"/><rect x="9.70" y="5.70" width="1.8" height="9.00" fill="#5a9a28" transform="rotate(0 10.6 10.2)"/><rect x="9.70" y="5.70" width="1.8" height="9.00" fill="#5a9a28" transform="rotate(45 10.6 10.2)"/><rect x="9.70" y="5.70" width="1.8" height="9.00" fill="#5a9a28" transform="rotate(90 10.6 10.2)"/><rect x="9.70" y="5.70" width="1.8" height="9.00" fill="#5a9a28" transform="rotate(135 10.6 10.2)"/><circle cx="10.6" cy="10.2" r="3.3" fill="#5a9a28"/><circle cx="10.6" cy="10.2" r="1.4" fill="#f0f0f0"/></svg></div><div class="gb" style="left:7px;top:648px;width:332px;height:124px"></div><div style="position:absolute;left:14.8px;top:648px;width:76.9px;height:2px;background:#f0f0f0"></div><div class="t" style="left:16.08px;top:641px;transform:scaleX(0.9422);">Frequency</div><div class="gb" style="left:13px;top:668px;width:157px;height:41px"></div><div style="position:absolute;left:20.9px;top:668px;width:50.1px;height:2px;background:#f0f0f0"></div><div class="t" style="left:22.65px;top:661px;transform:scaleX(0.9259);">Center</div><div class="sunk" style="left:19px;top:679px;width:146px;height:25px"></div><div class="t" style="left:22.63px;top:683px;transform:scaleX(0.9665);">100 MHz</div><div class="gb" style="left:13px;top:725px;width:157px;height:41px"></div><div style="position:absolute;left:20.7px;top:725px;width:89.7px;height:2px;background:#f0f0f0"></div><div class="t" style="left:22.49px;top:718px;transform:scaleX(0.9739);">Sample rate</div><div class="sunk" style="left:19px;top:736px;width:145px;height:25px"><div class="btn3" style="right:0;top:1px;width:16px;height:21px"><svg style="position:absolute;left:4px;top:7px" width="7" height="4" viewBox="0 0 7 4"><path d="M0 0H7L3.5 3.7Z" fill="#000"/></svg></div></div><div class="t" style="left:22.43px;top:740px;transform:scaleX(0.9617);">10 MHz</div><div class="gb" style="left:177px;top:696px;width:157px;height:41px"></div><div style="position:absolute;left:185.1px;top:696px;width:108.9px;height:2px;background:#f0f0f0"></div><div class="t" style="left:186.35px;top:689px;transform:scaleX(0.9653);">Baseband filter</div><div class="sunk" style="left:183px;top:707px;width:145px;height:25px"><div class="btn3" style="right:0;top:1px;width:16px;height:21px"><svg style="position:absolute;left:4px;top:7px" width="7" height="4" viewBox="0 0 7 4"><path d="M0 0H7L3.5 3.7Z" fill="#000"/></svg></div></div><div class="t" style="left:186.99px;top:711px;transform:scaleX(0.9463);">8 MHz</div><div class="gb" style="left:346px;top:648px;width:164px;height:124px"></div><div style="position:absolute;left:353.7px;top:648px;width:41.1px;height:2px;background:#f0f0f0"></div><div class="t" style="left:354.95px;top:641px;transform:scaleX(0.9630);">Level</div><div class="gb" style="left:352px;top:668px;width:152px;height:41px"></div><div style="position:absolute;left:360.0px;top:668px;width:69.6px;height:2px;background:#f0f0f0"></div><div class="t" style="left:361.20px;top:661px;transform:scaleX(1.0015);">LNA gain</div><div class="sunk" style="left:358px;top:679px;width:140px;height:25px"><div class="btn3" style="right:0;top:1px;width:16px;height:21px"><svg style="position:absolute;left:4px;top:7px" width="7" height="4" viewBox="0 0 7 4"><path d="M0 0H7L3.5 3.7Z" fill="#000"/></svg></div></div><div class="t" style="left:361.80px;top:683px;transform:scaleX(0.9837);">24 dB</div><div class="gb" style="left:352px;top:725px;width:152px;height:41px"></div><div style="position:absolute;left:360.0px;top:725px;width:71.4px;height:2px;background:#f0f0f0"></div><div class="t" style="left:362.50px;top:718px;transform:scaleX(0.9693);">VGA gain</div><div class="sunk" style="left:358px;top:736px;width:140px;height:25px"><div class="btn3" style="right:0;top:1px;width:16px;height:21px"><svg style="position:absolute;left:4px;top:7px" width="7" height="4" viewBox="0 0 7 4"><path d="M0 0H7L3.5 3.7Z" fill="#000"/></svg></div></div><div class="t" style="left:361.80px;top:740px;transform:scaleX(0.9837);">20 dB</div><div class="gb" style="left:517px;top:648px;width:328px;height:124px"></div><div style="position:absolute;left:524.8px;top:648px;width:65.1px;height:2px;background:#f0f0f0"></div><div class="t" style="left:526.06px;top:641px;transform:scaleX(0.9575);">FFT / SF</div><div class="gb" style="left:523px;top:668px;width:155px;height:41px"></div><div style="position:absolute;left:530.7px;top:668px;width:62.4px;height:2px;background:#f0f0f0"></div><div class="t" style="left:532.00px;top:661px;transform:scaleX(0.9284);">FFT size</div><div class="sunk" style="left:529px;top:679px;width:143px;height:25px"><div class="btn3" style="right:0;top:1px;width:16px;height:21px"><svg style="position:absolute;left:4px;top:7px" width="7" height="4" viewBox="0 0 7 4"><path d="M0 0H7L3.5 3.7Z" fill="#000"/></svg></div></div><div class="t" style="left:532.72px;top:683px;transform:scaleX(1.0828);">2¹⁴ = 16384</div><div class="gb" style="left:523px;top:725px;width:155px;height:41px"></div><div style="position:absolute;left:530.7px;top:725px;width:66.4px;height:2px;background:#f0f0f0"></div><div class="t" style="left:532.51px;top:718px;transform:scaleX(0.9439);">SF depth</div><div class="sunk" style="left:529px;top:736px;width:143px;height:24px"><div class="btn3" style="right:0;top:1px;width:16px;height:10px"><svg style="position:absolute;left:5px;top:3px" width="5" height="3" viewBox="0 0 5 3"><path d="M0.4 2.6H4.6L2.5 0.3Z" fill="#000"/></svg></div><div class="btn3" style="right:0;top:11px;width:16px;height:10px"><svg style="position:absolute;left:5px;top:3px" width="5" height="3" viewBox="0 0 5 3"><path d="M0.4 0.3H4.6L2.5 2.6Z" fill="#000"/></svg></div></div><div class="t" style="left:532.98px;top:740px;transform:scaleX(1.0177);">2048</div><div class="gb" style="left:685px;top:696px;width:155px;height:41px"></div><div style="position:absolute;left:692.8px;top:696px;width:123.5px;height:2px;background:#f0f0f0"></div><div class="t" style="left:695.30px;top:689px;transform:scaleX(0.9970);">Window function</div><div class="sunk" style="left:691px;top:707px;width:142px;height:25px"><div class="btn3" style="right:0;top:1px;width:16px;height:21px"><svg style="position:absolute;left:4px;top:7px" width="7" height="4" viewBox="0 0 7 4"><path d="M0 0H7L3.5 3.7Z" fill="#000"/></svg></div></div><div class="t" style="left:694.37px;top:711px;transform:scaleX(0.9504);">Rectangular</div><div class="gb" style="left:852px;top:648px;width:164px;height:124px"></div><div style="position:absolute;left:860.0px;top:648px;width:41.1px;height:2px;background:#f0f0f0"></div><div class="t" style="left:861.85px;top:641px;transform:scaleX(0.8972);">Scale</div><div class="gb" style="left:858px;top:668px;width:152px;height:41px"></div><div style="position:absolute;left:866.1px;top:668px;width:28.5px;height:2px;background:#f0f0f0"></div><div class="t" style="left:867.38px;top:661px;transform:scaleX(0.9384);">Ref</div><div class="sunk" style="left:864px;top:679px;width:140px;height:24px"><div class="btn3" style="right:0;top:1px;width:16px;height:10px"><svg style="position:absolute;left:5px;top:3px" width="5" height="3" viewBox="0 0 5 3"><path d="M0.4 2.6H4.6L2.5 0.3Z" fill="#a0a0a0"/></svg></div><div class="btn3" style="right:0;top:11px;width:16px;height:10px"><svg style="position:absolute;left:5px;top:3px" width="5" height="3" viewBox="0 0 5 3"><path d="M0.4 0.3H4.6L2.5 2.6Z" fill="#000"/></svg></div></div><div class="t" style="left:868.22px;top:683px;transform:scaleX(1.0182);">0</div><div class="gb" style="left:858px;top:725px;width:152px;height:41px"></div><div style="position:absolute;left:866.1px;top:725px;width:28.5px;height:2px;background:#f0f0f0"></div><div class="t" style="left:867.28px;top:718px;transform:scaleX(1.0175);">Div</div><div class="sunk" style="left:864px;top:736px;width:140px;height:24px"><div class="btn3" style="right:0;top:1px;width:16px;height:10px"><svg style="position:absolute;left:5px;top:3px" width="5" height="3" viewBox="0 0 5 3"><path d="M0.4 2.6H4.6L2.5 0.3Z" fill="#000"/></svg></div><div class="btn3" style="right:0;top:11px;width:16px;height:10px"><svg style="position:absolute;left:5px;top:3px" width="5" height="3" viewBox="0 0 5 3"><path d="M0.4 0.3H4.6L2.5 2.6Z" fill="#000"/></svg></div></div><div class="t" style="left:867.56px;top:740px;transform:scaleX(1.0185);">10</div><div class="t" style="left:7.26px;top:777px;transform:scaleX(1.0164);">Status: running</div><div style="position:absolute;left:128px;top:777px;width:1px;height:18px;background:#a0a0a0"></div><div style="position:absolute;left:129px;top:777px;width:1px;height:18px;background:#fff"></div><div class="t" style="left:137.50px;top:777px;transform:scaleX(1.0083);">Acquisition time: 3.355 s</div><svg style="position:absolute;left:1009px;top:783px" width="14" height="14" viewBox="0 0 14 14" stroke-width="1.4"><path d="M1 14L14 1M5 14L14 5M9 14L14 9" stroke="#a0a0a0"/><path d="M2.2 14L14 2.2M6.2 14L14 6.2M10.2 14L14 10.2" stroke="#fff" stroke-width="1"/></svg><div style="position:absolute;left:1px;top:31px;width:1022px;height:766px;border:1px solid #fbf7f2"></div><div id="frame"></div>
</body></html>
